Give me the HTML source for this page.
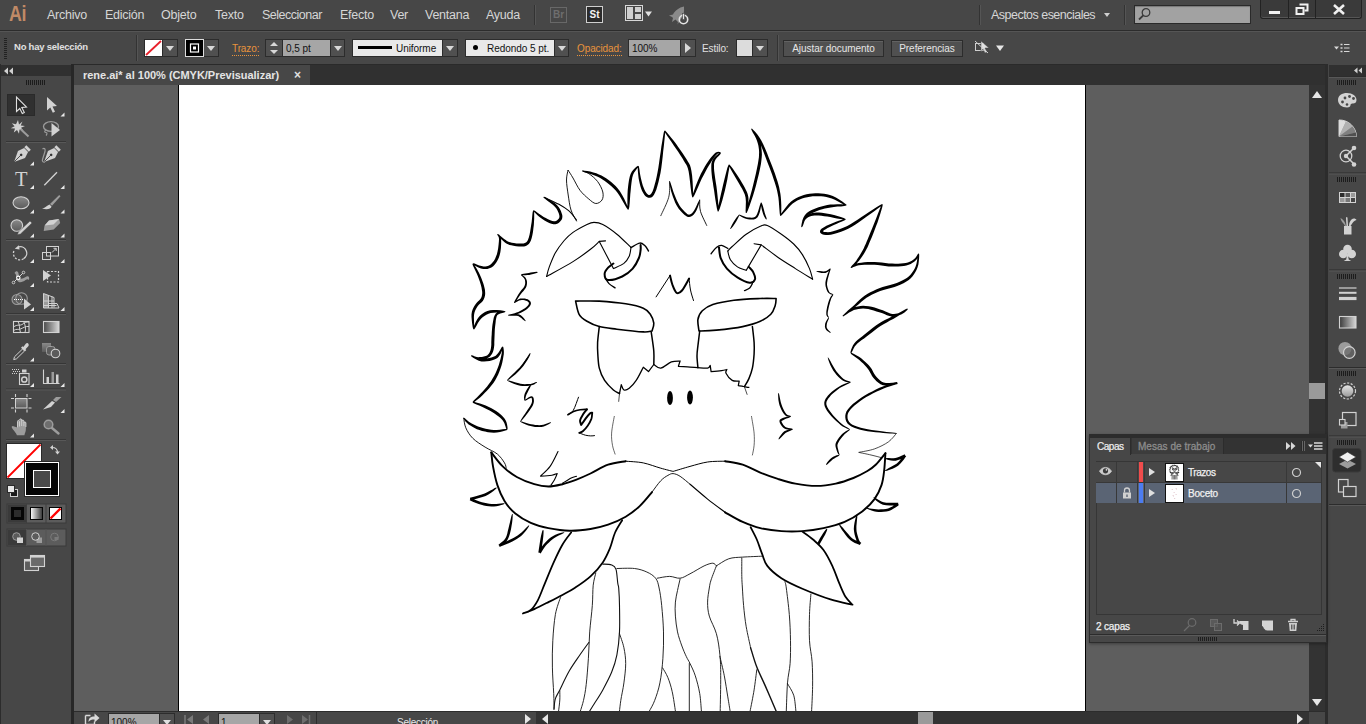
<!DOCTYPE html>
<html lang="es">
<head>
<meta charset="utf-8">
<title>rene.ai* al 100% (CMYK/Previsualizar)</title>
<style>
*{box-sizing:border-box;margin:0;padding:0}
html,body{width:1366px;height:724px;overflow:hidden;background:#474747;font-family:"Liberation Sans",sans-serif;color:#dcdcdc;font-size:11px}
.abs{position:absolute}
#app{position:relative;width:1366px;height:724px;background:#474747;overflow:hidden}
/* menubar */
#menubar{left:0;top:0;width:1366px;height:31px;background:#474747;border-bottom:1px solid #2c2c2c}
#menubar .mi{position:absolute;top:8px;font-size:12.5px;color:#d6d6d6;white-space:nowrap;letter-spacing:-0.25px}
#logo{left:9px;top:-1px;font-size:22px;font-weight:bold;color:#c08a66;letter-spacing:-0.5px;line-height:30px;transform:scaleX(.81);transform-origin:left center}
/* control bar */
#ctrl{left:-1px;top:31px;width:1367px;height:34px;background:#474747;border-top:1px solid #555;border-bottom:1px solid #2a2a2a}
#ctrl .t{position:absolute;white-space:nowrap;font-size:10px;color:#e0e0e0;top:9px;letter-spacing:-0.1px;line-height:12px}
#ctrl .o{color:#e8933c;border-bottom:1px dotted #e8933c;line-height:12px}
.fld{position:absolute;background:#a6a6a6;border:1px solid #2c2c2c;color:#111;font-size:10px;line-height:18px;padding-left:3px;white-space:nowrap;letter-spacing:-0.05px;overflow:hidden}
.dd{position:absolute;background:#505050;border:1px solid #2c2c2c;border-left:none}
.dd:after{content:"";position:absolute;left:50%;top:50%;margin:-2px 0 0 -4px;border:4px solid transparent;border-top:5px solid #d8d8d8;border-bottom:none}
.btn{position:absolute;border:1px solid #2c2c2c;background:#505050;color:#e6e6e6;font-size:10px;text-align:center;line-height:15px;white-space:nowrap;letter-spacing:-0.05px;box-shadow:inset 0 1px 0 #626262}
/* left tools */
#tools{left:0;top:64px;width:74px;height:660px;background:#474747;border-left:1px solid #2c2c2c;border-right:3px solid #272727}
#tools .hd{position:absolute;left:0;top:1px;width:70px;height:11px;background:#303030}
.grip{position:absolute;height:5px;background:repeating-linear-gradient(90deg,#1e1e1e 0,#1e1e1e 1px,transparent 1px,transparent 2px)}
.sep{position:absolute;left:5px;width:60px;height:1px;background:#5a5a5a;border-top:1px solid #3a3a3a;height:2px}
/* doc */
#tabrow{left:74px;top:65px;width:1251px;height:20px;background:#303030}
#tab{left:74px;top:65px;width:236px;height:20px;background:#474747;font-size:11px;font-weight:bold;color:#e4e4e4;line-height:21px;padding-left:9px;white-space:nowrap;letter-spacing:-0.02px}
#canvas{left:74px;top:85px;width:1235px;height:626px;background:#5e5e5e;overflow:hidden}
#art{left:104px;top:-1px;width:908px;height:640px;background:#fff;border:1px solid #000}
#vscroll{left:1309px;top:85px;width:16px;height:626px;background:#333}
#status{left:74px;top:711px;width:1251px;height:13px;background:#474747;border-top:1px solid #2c2c2c}
#status .f{position:absolute;top:1px;height:14px;background:#a6a6a6;border:1px solid #2c2c2c;color:#111;font-size:10px;line-height:18px;padding-left:2px;overflow:hidden}
#status .d{position:absolute;top:1px;height:14px;background:#505050;border:1px solid #2c2c2c;border-left:none}
#status .d:after{content:'';position:absolute;left:3px;top:6px;border:4px solid transparent;border-top:5px solid #e0e0e0;border-bottom:none}
/* right dock */
#dock{left:1325px;top:64px;width:41px;height:660px;background:#474747;border-left:3px solid #2c2c2c}
/* layers */
#layers{left:1089px;top:434px;width:238px;height:209px;background:#474747;border:1px solid #2c2c2c;border-top:4px solid #2c2c2c;box-shadow:0 1px 3px rgba(0,0,0,.35)}
#layers .abs{position:absolute}
#layers .row{position:absolute;left:6px;width:225px;height:21px}
#layers .cs{position:absolute;top:0;width:1px;height:100%;background:#383838}
#layers .nm{position:absolute;left:92px;top:4px;font-size:10px;letter-spacing:-0.3px;color:#f0f0f0;line-height:13px;-webkit-text-stroke:.25px #f0f0f0}
</style>
</head>
<body>
<div id="app">
<!--MENUBAR-->
<div id="menubar" class="abs">
<div id="logo" class="abs">Ai</div>
<span class="mi" style="left:47px">Archivo</span>
<span class="mi" style="left:105px">Edición</span>
<span class="mi" style="left:161px">Objeto</span>
<span class="mi" style="left:215px">Texto</span>
<span class="mi" style="left:262px;letter-spacing:-0.5px">Seleccionar</span>
<span class="mi" style="left:340px">Efecto</span>
<span class="mi" style="left:390px">Ver</span>
<span class="mi" style="left:425px">Ventana</span>
<span class="mi" style="left:486px">Ayuda</span>

<div class="abs" style="left:534px;top:5px;width:1px;height:20px;background:#333;box-shadow:1px 0 0 #555"></div>
<div class="abs" style="left:550px;top:7px;width:17px;height:16px;border:1px solid #686868;color:#6e6e6e;font-size:10px;font-weight:bold;line-height:14px;text-align:center">Br</div>
<div class="abs" style="left:586px;top:6px;width:17px;height:17px;border:1px solid #cfcfcf;background:#2b2b2b;color:#f2f2f2;font-size:10px;font-weight:bold;line-height:15px;text-align:center">St</div>
<svg class="abs" style="left:625px;top:5px" width="30" height="18" viewBox="0 0 30 18"><rect x="0.5" y="0.5" width="17" height="15" fill="#474747" stroke="#d8d8d8"/><rect x="2" y="2" width="6" height="12" fill="#cfcfcf"/><rect x="10" y="2" width="6" height="5" fill="#cfcfcf"/><rect x="10" y="9" width="6" height="5" fill="#cfcfcf"/><path d="M20 6.5h7l-3.5 5z" fill="#e0e0e0"/></svg>
<svg class="abs" style="left:667px;top:5px" width="25" height="21" viewBox="0 0 25 21"><path d="M17 1.5c-5 1-9 4-11 8l-4 1 3 1.5 1 1-1 4 3.5-2.5 2.5 2.5-.5 2.5 3-5c3-3 4-8 3.5-12z" fill="#8a8a8a"/><circle cx="16.5" cy="14.5" r="4.2" fill="none" stroke="#e6e6e6" stroke-width="1.6"/><rect x="15.6" y="8.5" width="1.8" height="6" fill="#e6e6e6" stroke="#474747" stroke-width=".6"/></svg>
<div class="abs" style="left:979px;top:5px;width:1px;height:20px;background:#333;box-shadow:1px 0 0 #555"></div>
<span class="mi" style="left:991px;top:8px;font-size:12.5px;letter-spacing:-0.52px">Aspectos esenciales</span>
<div class="abs" style="left:1104px;top:13px;border:3.5px solid transparent;border-top:4px solid #d0d0d0;border-bottom:none"></div>
<div class="abs" style="left:1124px;top:5px;width:1px;height:20px;background:#333;box-shadow:1px 0 0 #555"></div>
<div class="abs" style="left:1134px;top:5px;width:117px;height:19px;background:#a2a2a2;border:1px solid #2a2a2a;box-shadow:inset 0 1px 1px #777"></div>
<svg class="abs" style="left:1137px;top:7px" width="16" height="14" viewBox="0 0 16 14"><circle cx="9" cy="5.5" r="3.8" fill="none" stroke="#3a3a3a" stroke-width="1.3"/><path d="M6.3 8.3L2 12.5" stroke="#3a3a3a" stroke-width="1.8"/></svg>
<div class="abs" style="left:1260px;top:0;width:102px;height:19px;background:#3a3a3a;border:1px solid #222;border-top:none;border-radius:0 0 3px 3px;box-shadow:inset 0 -1px 0 #555"></div>
<div class="abs" style="left:1288px;top:0;width:1px;height:18px;background:#222"></div>
<div class="abs" style="left:1315px;top:0;width:1px;height:18px;background:#222"></div>
<div class="abs" style="left:1269px;top:11px;width:11px;height:3px;background:#f0f0f0"></div>
<svg class="abs" style="left:1295px;top:3px" width="14" height="13" viewBox="0 0 14 13"><path d="M4.5 1.5h8v6h-3" fill="none" stroke="#f0f0f0" stroke-width="2"/><rect x="1.5" y="5" width="7" height="6" fill="none" stroke="#f0f0f0" stroke-width="2"/></svg>
<svg class="abs" style="left:1332px;top:3px" width="14" height="13" viewBox="0 0 14 13"><path d="M2 2l10 9M12 2L2 11" stroke="#f0f0f0" stroke-width="2.6"/></svg>

</div>
<!--CTRL-->
<div id="ctrl" class="abs">

<div class="abs" style="left:5px;top:6px;width:3px;height:21px;background:repeating-linear-gradient(180deg,#222 0,#222 1px,transparent 1px,transparent 2px)"></div>
<span class="t" style="left:15px;font-weight:bold;font-size:9.5px;letter-spacing:-0.23px">No hay selección</span>
<div class="abs" style="left:137px;top:3px;width:1px;height:26px;background:#333;box-shadow:1px 0 0 #555"></div>
<svg class="abs" style="left:145px;top:7px" width="19" height="18" viewBox="0 0 19 18"><rect x=".5" y=".5" width="18" height="17" fill="#fff" stroke="#2a2a2a"/><path d="M2 16L17 2" stroke="#e8202a" stroke-width="1.8"/></svg>
<div class="dd" style="left:164px;top:7px;width:15px;height:18px"></div>
<svg class="abs" style="left:186px;top:7px" width="19" height="18" viewBox="0 0 19 18"><rect x=".5" y=".5" width="18" height="17" fill="#000" stroke="#ddd"/><rect x="5.5" y="5" width="8" height="8" fill="none" stroke="#fff" stroke-width="1.2"/><rect x="8" y="7.5" width="3" height="3" fill="#fff"/></svg>
<div class="dd" style="left:205px;top:7px;width:15px;height:18px"></div>
<span class="t o" style="left:233px;top:11px">Trazo:</span>
<div class="abs" style="left:266px;top:7px;width:18px;height:18px;background:#505050;border:1px solid #2c2c2c"></div>
<div class="abs" style="left:271px;top:10px;border:4px solid transparent;border-bottom:4px solid #d8d8d8;border-top:none"></div>
<div class="abs" style="left:271px;top:18px;border:4px solid transparent;border-top:4px solid #d8d8d8;border-bottom:none"></div>
<div class="fld" style="left:283px;top:7px;width:49px;height:18px">0,5 pt</div>
<div class="dd" style="left:332px;top:7px;width:14px;height:18px"></div>
<div class="fld" style="left:353px;top:7px;width:91px;height:18px;background:#e9e9e9;padding-left:43px">Uniforme</div>
<div class="abs" style="left:359px;top:14px;width:34px;height:3px;background:#000"></div>
<div class="dd" style="left:444px;top:7px;width:15px;height:18px"></div>
<div class="fld" style="left:466px;top:7px;width:90px;height:18px;background:#e9e9e9;padding-left:21px">Redondo 5 pt.</div>
<div class="abs" style="left:474px;top:13px;width:5px;height:5px;border-radius:3px;background:#000"></div>
<div class="dd" style="left:556px;top:7px;width:14px;height:18px"></div>
<span class="t o" style="left:578px;top:11px">Opacidad:</span>
<div class="fld" style="left:629px;top:7px;width:53px;height:18px">100%</div>
<div class="abs" style="left:682px;top:7px;width:15px;height:18px;background:#505050;border:1px solid #2c2c2c;border-left:none"></div>
<div class="abs" style="left:686px;top:11px;border:5px solid transparent;border-left:6px solid #d8d8d8;border-right:none"></div>
<span class="t" style="left:703px;top:11px">Estilo:</span>
<div class="abs" style="left:737px;top:7px;width:17px;height:18px;background:#dcdcdc;border:1px solid #2a2a2a"></div>
<div class="dd" style="left:754px;top:7px;width:15px;height:18px"></div>
<div class="abs" style="left:778px;top:3px;width:1px;height:26px;background:#333;box-shadow:1px 0 0 #555"></div>
<div class="btn" style="left:784px;top:8px;width:101px;height:17px">Ajustar documento</div>
<div class="btn" style="left:892px;top:8px;width:72px;height:17px">Preferencias</div>
<svg class="abs" style="left:975px;top:8px" width="34" height="16" viewBox="0 0 34 16"><rect x="1.5" y="3.5" width="8" height="7" fill="none" stroke="#cfcfcf"/><path d="M7 1l8 7h-4l2 4-2 1-2-4-2 3z" fill="#e0e0e0" stroke="#474747" stroke-width=".5"/><path d="M1 1l13 12" stroke="#cfcfcf" stroke-width="1"/><path d="M22 5.5h8l-4 5.5z" fill="#e6e6e6"/></svg>
<svg class="abs" style="left:1335px;top:11px" width="18" height="12" viewBox="0 0 18 12"><path d="M0 3.5h5l-2.5 3z" fill="#d8d8d8"/><path d="M6.5 1.5h2M6.5 5h2M6.5 8.5h2" stroke="#d8d8d8" stroke-width="1.6"/><path d="M10 1.5h5.5M10 5h5.5M10 8.5h5.5" stroke="#d8d8d8" stroke-width="1.2"/></svg>

</div>
<!--TOOLS-->
<div id="tools" class="abs">
<div class="hd"></div>
<!--TOOLSBODY-->
</div>
<!--TOOLSSVG--><svg class="abs" style="left:0;top:0" width="74" height="724" viewBox="0 0 74 724"><defs><linearGradient id="gv" x1="0" y1="0" x2="0" y2="1"><stop offset="0" stop-color="#8a8a8a"/><stop offset="1" stop-color="#5a5a5a"/></linearGradient><linearGradient id="gh" x1="0" y1="0" x2="1" y2="0"><stop offset="0" stop-color="#4a4a4a"/><stop offset="1" stop-color="#d8d8d8"/></linearGradient><linearGradient id="gh2" x1="0" y1="0" x2="1" y2="0"><stop offset="0" stop-color="#fff"/><stop offset="1" stop-color="#333"/></linearGradient></defs><path d="M8 67.5l-4 3.5 4 3.5zM13 67.5l-4 3.5 4 3.5z" fill="#d0d0d0"/><path d="M26.5 80v5M28.5 80v5M30.5 80v5M32.5 80v5M34.5 80v5M36.5 80v5M38.5 80v5M40.5 80v5M42.5 80v5M44.5 80v5" stroke="#1c1c1c" stroke-width="1"/><rect x="7.5" y="94.5" width="27" height="21" fill="#303030" stroke="#2a2a2a"/><path d="M16.5 97V111.5L19.8 108.5 22.3 113.5 24.3 112.5 21.8 107.5 26.5 107z" fill="#262626" stroke="#e0e0e0" stroke-width="1.1" stroke-linejoin="miter"/><path d="M47 97V110.5L50.3 107.5 52.8 112.8 55 111.8 52.5 106.5 57 106z" fill="#d2d2d2"/><path d="M64.5 112.5V116.5H60.5z" fill="#e8e8e8"/><path d="M18 120l1 4.5 3.5-3-1.8 4 4.3.5-4 1.8 2.5 3-4-1.2-.5 4.2-2-3.8-3.2 2.5 1.2-4-4.2-.3 3.8-2-2.8-3 4.2 1z" fill="#d2d2d2"/><path d="M20.5 129l8 7.5" stroke="#9c9c9c" stroke-width="2"/><ellipse cx="51" cy="126.5" rx="7.5" ry="4.8" fill="none" stroke="#9c9c9c" stroke-width="1.3"/><path d="M46 130c-2 1-1.5 2.5 0 2.5 1.5 0 1 2 0 3" fill="none" stroke="#9c9c9c" stroke-width="1.1"/><path d="M51.5 123v13.5l8.5-6.5z" fill="#d2d2d2"/><g transform="translate(21.5 154.5) rotate(45)"><path d="M-3.2 -10h6.4v2.8h-6.4z" fill="#d2d2d2"/><path d="M-2.8 -6.5h5.6l2.2 6.5-5 10.5-5-10.5z" fill="#d2d2d2"/><path d="M0 10.5V1.5" stroke="#474747" stroke-width=".9"/><circle cx="0" cy="0.5" r="1.3" fill="#333"/></g><path d="M34 161.5V165.5H30z" fill="#e8e8e8"/><g transform="translate(51.5 154.5) rotate(45)"><path d="M-3.2 -10h6.4v2.8h-6.4z" fill="#d2d2d2"/><path d="M-2.8 -6.5h5.6l2.2 6.5-5 10.5-5-10.5z" fill="#d2d2d2"/><path d="M0 10.5V1.5" stroke="#474747" stroke-width=".9"/><circle cx="0" cy="0.5" r="1.3" fill="#333"/></g><path d="M42.5 149c2-1.5 3 0 2.5 2.5l-2.5 8c-.5 2 .5 3 2.5 2.5" fill="none" stroke="#9c9c9c" stroke-width="1.2"/><text x="21.2" y="185.6" font-family="Liberation Serif, serif" font-size="20.5" text-anchor="middle" fill="#d2d2d2">T</text><path d="M34 185V189H30z" fill="#e8e8e8"/><path d="M44.3 185.3L57 172.2" stroke="#d2d2d2" stroke-width="1.3"/><path d="M64.5 185V189H60.5z" fill="#e8e8e8"/><ellipse cx="21" cy="202.8" rx="8" ry="6" fill="url(#gv)" stroke="#d2d2d2" stroke-width="1.1"/><path d="M34 209.5V213.5H30z" fill="#e8e8e8"/><path d="M59.2 195l1.3 1.3-8.5 9.5-2-1.8z" fill="#9c9c9c"/><path d="M49.5 204.5l2 2c-.5 2.5-4.5 3.5-9.5 2 3-.5 4-2.5 7.5-4z" fill="#d2d2d2"/><path d="M64.5 209.5V213.5H60.5z" fill="#e8e8e8"/><circle cx="16.8" cy="225.5" r="5.8" fill="url(#gv)" stroke="#d2d2d2" stroke-width="1.1"/><path d="M30 221l2 2-11.5 11-3 .8.8-2.8z" fill="#d2d2d2" stroke="#474747" stroke-width=".5"/><path d="M34 233.5V237.5H30z" fill="#e8e8e8"/><path d="M49 220.5l10-1.5 1.2 4-6.5 6.5-10 1.5.8-5z" fill="#9c9c9c"/><path d="M49 220.5l10-1.5-5.5 5.5-9 1z" fill="#d2d2d2"/><path d="M64.5 233.5V237.5H60.5z" fill="#e8e8e8"/><path d="M19 246.8a6.5 6.5 0 0 1 4.5 12" fill="none" stroke="#d2d2d2" stroke-width="1.3"/><path d="M23.5 258.8a6.5 6.5 0 0 1-9-9" fill="none" stroke="#d2d2d2" stroke-width="1.3" stroke-dasharray="2 1.5"/><path d="M14.8 248.8l4-3.5.8 4.3z" fill="#d2d2d2"/><path d="M34 259V263H30z" fill="#e8e8e8"/><rect x="46.5" y="246.5" width="12" height="9.5" fill="#3e3e3e" stroke="#d2d2d2"/><rect x="42.5" y="252.5" width="8" height="7" fill="none" stroke="#d2d2d2"/><path d="M52 252.5l4-4M53.5 248.3h2.7v2.7" fill="none" stroke="#d2d2d2" stroke-width="1"/><path d="M64.5 259V263H60.5z" fill="#e8e8e8"/><path d="M13.5 282.5L23.5 272.5" stroke="#d2d2d2" stroke-width="1"/><path d="M14.5 273c1-2 2.5-2.5 3.5-1 1 2 .5 4.5 1.5 6 2 2 4.5-.5 7-1.5 2.5-.8 3 1 2.5 3.5-.8-1-2-1-3.5 0-2.5 2-6 3.5-8 1-1.5-2-.5-6.5-3-8z" fill="#9c9c9c"/><circle cx="13.5" cy="282.5" r="1.3" fill="#474747" stroke="#d2d2d2" stroke-width=".9"/><circle cx="23.5" cy="272.5" r="1.3" fill="#474747" stroke="#d2d2d2" stroke-width=".9"/><circle cx="18.3" cy="277.8" r="1.7" fill="#474747" stroke="#fff" stroke-width="1.1"/><path d="M34 283V287H30z" fill="#e8e8e8"/><rect x="47.5" y="271.5" width="11" height="10.5" fill="none" stroke="#d2d2d2" stroke-width="1.2" stroke-dasharray="2 1.5"/><path d="M43 270v11l8-5.5z" fill="#d2d2d2"/><circle cx="17" cy="299.5" r="5" fill="#5c5c5c" stroke="#9c9c9c" stroke-width="1.1"/><circle cx="21.5" cy="298.5" r="5.8" fill="none" stroke="#9c9c9c" stroke-width="1.1"/><path d="M14 299.5h9" stroke="#fff" stroke-width="1.2" stroke-dasharray="1 1"/><path d="M24 298.5v11l7-5z" fill="#d2d2d2"/><path d="M34 307V311H30z" fill="#e8e8e8"/><path d="M43 293.5l5 1.5v13h-5z" fill="#9c9c9c"/><path d="M43.5 293.5v14.5h15.5M48.5 295v13M43.5 301h10.5M43.5 305.5h13M43.5 293.5l10.5 4v10M52 296.5v11.5M48 303.5h9l2 4.5" fill="none" stroke="#d2d2d2" stroke-width="1"/><path d="M64.5 307V311H60.5z" fill="#e8e8e8"/><rect x="13.5" y="321.5" width="15.5" height="11" fill="#3e3e3e" stroke="#d2d2d2" stroke-width="1.1"/><path d="M13.5 327c4-3 6-1 8.5-2.5s4-3 7-2.5M13.5 330.5c3-2 4.5-.5 7-1.5s5-3 8.5-2.5M18 321.5c2 3 1 7 2.5 11M23.5 321.5c2 3 2.5 8 1.5 11" fill="none" stroke="#d2d2d2" stroke-width="1"/><rect x="43.5" y="321.5" width="15.5" height="11" fill="url(#gh)" stroke="#d2d2d2" stroke-width="1.1"/><path d="M26 343.5c1.5-1.5 3.5 .5 2.5 2.5l-3 3.2 .8 .8-1.5 1.5-3.8-3.8 1.5-1.5.8 .8z" fill="#d2d2d2"/><path d="M22.5 349l2 2-8 7.8-2.8 .8.8-2.8z" fill="#474747" stroke="#d2d2d2" stroke-width="1"/><path d="M34 357.5V361.5H30z" fill="#e8e8e8"/><rect x="42" y="343" width="9" height="9" fill="url(#gv)"/><rect x="46.5" y="346.5" width="8.5" height="8.5" rx="2.5" fill="#5c5c5c" stroke="#9c9c9c" stroke-width="1"/><circle cx="55.5" cy="353.5" r="4.3" fill="#5c5c5c" stroke="#d2d2d2" stroke-width="1.1"/><rect x="19.5" y="373.5" width="9.5" height="11" fill="#474747" stroke="#d2d2d2" stroke-width="1.1"/><rect x="22" y="369.5" width="4.5" height="3" fill="#d2d2d2"/><circle cx="24.3" cy="379.5" r="2.6" fill="none" stroke="#d2d2d2" stroke-width="1.5"/><path d="M12 369.5h8M13 371.5h7M12 373.5h6" stroke="#d2d2d2" stroke-width="1" stroke-dasharray="1 1"/><path d="M34 383V387H30z" fill="#e8e8e8"/><path d="M43.5 369.5v14h16" fill="none" stroke="#d2d2d2" stroke-width="1.1"/><rect x="46.5" y="377" width="2.5" height="6" fill="#d2d2d2"/><rect x="51.5" y="372" width="2.5" height="11" fill="#9c9c9c"/><rect x="56" y="374.5" width="2.5" height="8.5" fill="#d2d2d2"/><path d="M64.5 383V387H60.5z" fill="#e8e8e8"/><rect x="15.5" y="398.5" width="11.5" height="9.5" fill="url(#gv)" stroke="#d2d2d2" stroke-width="1"/><path d="M15.5 394v3M27 394v3M15.5 409.5v3M27 409.5v3M11 398.5h3M11 408h3M28.5 398.5h3M28.5 408h3" stroke="#d2d2d2" stroke-width="1.1"/><path d="M43 409.5l9-8.5 3 1.5-4 4.5z" fill="#d2d2d2"/><path d="M53 400l3-3h5.5l-5.5 5z" fill="#9c9c9c"/><path d="M64.5 409V413H60.5z" fill="#e8e8e8"/><path d="M17.5 427.5v-6c0-1.5 2-1.5 2 0v-1.5c0-1.5 2.2-1.5 2.2 0v1.2c0-1.5 2.2-1.5 2.2 0v2c0-1.5 2-1.5 2 0v5.5c0 3-1 4-1.5 6.5h-7.5c-.5-2-2.5-3.5-5-7.5-.8-1.5 1-2.5 2.2-1.2z" fill="#9c9c9c"/><path d="M17.5 427.5v-6c0-1.5 2-1.5 2 0v5M19.5 420c0-1.5 2.2-1.5 2.2 0v6M21.7 421.2c0-1.5 2.2-1.5 2.2 0v5M23.9 423c0-1.5 2-1.5 2 0v4" fill="none" stroke="#d2d2d2" stroke-width=".9"/><path d="M34 433.5V437.5H30z" fill="#e8e8e8"/><circle cx="48.5" cy="424.5" r="4.3" fill="#6e6e6e" stroke="#9c9c9c" stroke-width="1.5"/><path d="M52 428l6.5 5.5" stroke="#9c9c9c" stroke-width="2.4" stroke-linecap="round"/><rect x="6.5" y="443.5" width="35" height="35" fill="#fff" stroke="#2a2a2a"/><path d="M7.5 477.5L40.5 444.5" stroke="#f00" stroke-width="1.8"/><rect x="24.5" y="461.5" width="35" height="35" fill="#fff" stroke="#2a2a2a"/><rect x="26" y="463" width="32" height="32" fill="#050505"/><rect x="33" y="470" width="18" height="18" fill="#fff"/><rect x="34" y="471" width="16" height="16" fill="#4a4a4a"/><path d="M52 447.5c3.5 0 5.5 1.5 5.5 5" fill="none" stroke="#d2d2d2" stroke-width="1.2"/><path d="M50 447.5l3-2.5v5zM55 451.5h5l-2.5 3z" fill="#d2d2d2"/><rect x="10.5" y="489.5" width="7" height="7" fill="#1a1a1a" stroke="#cfcfcf"/><rect x="7.5" y="485.5" width="7" height="7" fill="#e8e8e8" stroke="#2a2a2a"/><rect x="7" y="504" width="59" height="19" fill="#5c5c5c" stroke="#3a3a3a"/><rect x="7.5" y="504.5" width="19" height="18" fill="#3a3a3a"/><path d="M26.5 504v19M46 504v19" stroke="#3e3e3e"/><rect x="11" y="507" width="13" height="13" fill="#050505"/><rect x="14" y="510" width="7" height="7" fill="#2c2c2c"/><rect x="30.5" y="507.5" width="12" height="12" fill="url(#gh2)" stroke="#050505"/><rect x="49.5" y="507.5" width="12" height="12" fill="#fff" stroke="#050505"/><path d="M50.5 518.5L60.5 508.5" stroke="#f00" stroke-width="2.4"/><rect x="7" y="529" width="59" height="17" fill="#5c5c5c" stroke="#3a3a3a"/><rect x="7.5" y="529.5" width="19" height="16" fill="#3a3a3a"/><path d="M26.5 529v17M46 529v17" stroke="#525252"/><circle cx="16.5" cy="536.5" r="3.8" fill="#5a5a5a" stroke="#9c9c9c" stroke-width="1"/><rect x="17" y="537.5" width="6" height="5.5" fill="#d2d2d2"/><rect x="36.5" y="537.5" width="5.5" height="5.5" fill="#9c9c9c"/><circle cx="35.5" cy="536.5" r="3.8" fill="#5c5c5c" stroke="#d2d2d2" stroke-width="1"/><circle cx="54.5" cy="537" r="3.8" fill="none" stroke="#7a7a7a" stroke-width="1"/><path d="M54.5 537h4v3h-4z" fill="#7a7a7a"/><rect x="24.5" y="559.5" width="14" height="11" fill="#5e5e5e" stroke="#d2d2d2" stroke-width="1.1"/><path d="M24.5 560.5h14" stroke="#d2d2d2" stroke-width="2"/><rect x="30.5" y="555.5" width="14" height="11" fill="#6a6a6a" stroke="#d2d2d2" stroke-width="1.1"/><path d="M30.5 556.5h14" stroke="#d2d2d2" stroke-width="2.2"/><path d="M6 141.5h60" stroke="#363636"/><path d="M6 142.5h60" stroke="#585858"/><path d="M6 239.5h60" stroke="#363636"/><path d="M6 240.5h60" stroke="#585858"/><path d="M6 313.5h60" stroke="#363636"/><path d="M6 314.5h60" stroke="#585858"/><path d="M6 363.5h60" stroke="#363636"/><path d="M6 364.5h60" stroke="#585858"/><path d="M6 389.0h60" stroke="#363636"/><path d="M6 390.0h60" stroke="#585858"/><path d="M6 439.5h60" stroke="#363636"/><path d="M6 440.5h60" stroke="#585858"/></svg><!--/TOOLSSVG-->
<!--DOC-->
<div id="tabrow" class="abs"></div>
<div id="tab" class="abs">rene.ai* al 100% (CMYK/Previsualizar)<span style="position:absolute;left:220px;top:0;font-size:12px;font-weight:bold;color:#e0e0e0">×</span></div>
<div id="canvas" class="abs">
<div id="art" class="abs">
<!--ART-->
</div>
<!--ARTSVG--><svg class="abs" style="left:0;top:0" width="1235" height="626" viewBox="74 85 1235 626" fill="none" stroke="#000" stroke-linecap="round" stroke-linejoin="round"><path d="M463.4 418.4L463.9 419.3L464.7 420.4L465.7 421.7L467.1 423.1L468.6 424.4L470.4 425.6L472.4 426.8L474.6 428.0L476.9 429.2L479.4 430.1L482.1 430.9L485.0 431.6L488.0 432.2L490.9 432.5L493.9 432.7L496.9 432.5L500.0 432.0L503.0 431.3L505.5 430.6L507.2 429.9L507.0 429.1L505.2 429.0L502.6 429.3L499.7 429.7L496.7 429.9L493.9 429.9L491.2 429.7L488.4 429.3L485.6 428.7L482.9 428.0L480.4 427.3L478.0 426.5L475.8 425.5L473.7 424.5L471.7 423.4L470.0 422.4L468.5 421.4L467.1 420.3L465.9 419.2L464.9 418.3L464.0 417.8zM507.5 429.4L507.6 428.1L507.4 426.4L507.0 424.3L506.4 422.1L505.6 420.2L504.5 418.5L503.2 416.9L501.8 415.4L500.1 414.0L498.3 412.5L496.1 411.0L493.6 409.5L491.0 408.0L488.3 406.7L485.7 405.4L482.9 404.4L480.0 403.4L477.1 402.7L474.7 402.1L472.9 401.9L472.7 402.7L474.2 403.6L476.5 404.6L479.2 405.6L482.0 406.8L484.5 408.0L487.0 409.2L489.6 410.6L492.1 412.1L494.5 413.5L496.5 414.9L498.3 416.2L499.9 417.5L501.2 418.8L502.4 420.1L503.4 421.4L504.3 423.0L505.0 424.9L505.6 426.8L506.1 428.5L506.7 429.6zM473.1 402.6L474.4 401.9L476.2 400.6L478.2 399.0L480.4 397.2L482.5 395.3L484.6 393.1L486.9 390.8L489.2 388.3L491.4 385.6L493.4 382.9L495.2 380.2L496.8 377.3L498.2 374.4L499.4 371.5L500.5 368.6L501.5 365.6L502.3 362.5L502.9 359.4L503.4 356.6L503.8 354.2L503.9 352.1L503.8 350.3L503.6 348.8L503.4 347.6L503.1 346.8L502.3 346.8L502.1 347.7L502.1 348.9L502.1 350.3L502.0 351.9L501.6 353.8L501.1 356.2L500.5 358.9L499.7 361.8L498.9 364.8L497.9 367.6L496.7 370.4L495.5 373.2L494.1 375.9L492.6 378.6L491.0 381.3L489.1 383.8L487.1 386.4L484.9 389.0L482.7 391.4L480.7 393.5L478.8 395.6L476.9 397.5L475.0 399.2L473.5 400.7L472.5 402.0zM502.3 346.6L501.5 347.5L500.7 348.9L499.8 350.5L498.9 352.0L498.0 353.3L497.1 354.2L496.4 355.1L495.7 355.7L494.7 356.3L493.4 356.8L491.5 357.4L489.1 357.9L486.5 358.4L484.0 358.6L481.8 358.6L479.6 358.2L477.2 357.4L474.9 356.4L472.9 355.6L471.3 355.2L470.9 356.0L472.1 357.0L474.0 358.3L476.3 359.6L478.8 360.7L481.4 361.4L484.1 361.5L486.9 361.3L489.7 360.9L492.3 360.3L494.4 359.6L496.1 358.8L497.4 357.9L498.4 356.9L499.2 355.9L500.0 354.7L500.9 353.2L501.7 351.5L502.4 349.7L502.9 348.1L503.1 347.0zM470.9 356.0L471.7 356.6L472.9 357.4L474.4 358.2L476.2 358.9L478.0 359.2L480.0 359.3L482.2 359.3L484.4 359.0L486.6 358.5L488.5 357.6L490.0 356.5L491.2 355.1L492.2 353.5L493.0 351.7L493.6 349.7L494.0 347.5L494.3 344.9L494.3 342.3L494.4 339.7L494.5 337.2L494.6 334.7L494.7 332.2L494.8 329.7L495.0 327.3L495.3 325.0L495.6 322.6L495.8 320.3L496.2 318.2L496.7 316.3L497.4 315.1L498.6 314.2L500.3 313.5L502.3 313.0L504.1 312.6L505.4 312.1L505.2 311.3L503.9 311.2L502.0 311.3L499.8 311.6L497.6 312.3L495.8 313.5L494.6 315.4L493.8 317.5L493.3 319.9L492.9 322.3L492.5 324.6L492.2 327.0L492.0 329.5L491.8 332.0L491.7 334.5L491.5 337.0L491.4 339.6L491.3 342.2L491.3 344.8L491.1 347.1L490.8 349.1L490.3 350.8L489.7 352.2L489.0 353.5L488.1 354.5L487.1 355.4L485.7 356.0L483.9 356.6L481.9 356.9L479.9 357.1L478.2 357.2L476.7 357.0L475.1 356.5L473.6 355.9L472.3 355.4L471.3 355.2zM505.3 311.3L503.3 310.7L500.3 310.3L496.8 310.0L493.2 309.9L490.1 310.3L487.4 311.0L485.0 312.1L482.7 313.4L480.7 315.0L478.8 316.9L477.2 319.2L475.7 322.0L474.6 324.8L473.7 327.2L473.3 329.0L474.1 329.4L475.2 327.9L476.5 325.7L477.9 323.1L479.4 320.7L481.0 318.7L482.6 317.3L484.4 315.9L486.4 314.8L488.5 313.8L490.7 313.1L493.4 312.7L496.7 312.5L500.1 312.5L503.2 312.5L505.3 312.1zM474.1 329.2L474.3 327.0L474.1 323.9L474.0 320.5L473.9 317.1L474.1 314.4L474.5 312.4L475.1 310.7L475.8 309.2L476.7 307.8L477.6 306.3L478.6 305.0L479.9 303.7L481.4 302.4L482.8 300.9L483.8 299.2L484.5 297.4L485.0 295.6L485.2 293.7L485.1 291.7L484.9 289.5L484.3 286.9L483.5 284.0L482.4 281.0L481.3 278.0L480.1 275.2L478.8 272.5L477.3 269.7L475.7 267.1L474.3 264.9L473.2 263.5L472.4 263.9L473.0 265.7L474.1 268.0L475.4 270.7L476.7 273.5L477.9 276.2L478.9 278.9L479.9 281.8L480.8 284.8L481.5 287.5L481.9 289.9L482.2 291.9L482.2 293.6L482.0 295.1L481.7 296.5L481.2 297.8L480.4 299.1L479.3 300.3L477.9 301.6L476.5 303.0L475.2 304.7L474.2 306.3L473.3 308.0L472.5 309.8L471.9 311.8L471.5 314.2L471.5 317.1L471.8 320.6L472.2 324.1L472.7 327.2L473.3 329.2zM472.6 264.1L474.0 265.0L476.0 266.2L478.4 267.4L480.9 268.4L483.3 269.0L485.4 269.1L487.4 268.9L489.4 268.3L491.4 267.5L493.2 266.2L494.8 264.5L496.3 262.5L497.6 260.3L498.8 257.7L499.7 255.0L500.4 251.9L500.9 248.3L501.1 244.7L501.2 241.4L501.0 238.7L500.6 236.8L499.9 235.5L499.0 234.6L498.3 234.2L497.7 233.9L497.1 234.5L497.4 235.1L497.9 235.7L498.4 236.4L498.8 237.4L499.0 238.9L498.9 241.3L498.6 244.5L498.2 248.0L497.6 251.3L496.9 254.2L496.0 256.6L495.0 258.9L493.8 260.9L492.5 262.6L491.2 264.0L489.9 265.0L488.5 265.7L486.9 266.2L485.3 266.4L483.5 266.4L481.6 266.1L479.2 265.4L476.8 264.5L474.6 263.6L473.0 263.3zM497.1 234.5L498.0 235.7L499.3 237.2L501.0 239.0L502.7 240.6L504.3 241.9L505.6 242.9L506.8 243.7L508.0 244.3L509.5 244.9L511.2 245.3L513.5 245.8L516.1 246.2L519.0 246.5L521.7 246.6L524.1 246.4L525.9 245.9L527.5 245.1L528.8 244.0L529.9 242.5L530.9 240.6L531.7 238.0L532.4 235.0L533.0 231.7L533.4 228.3L533.8 225.2L534.0 221.9L534.2 218.5L534.2 215.3L534.2 212.5L533.9 210.5L533.1 210.5L532.6 212.4L532.3 215.2L532.0 218.4L531.7 221.7L531.2 224.8L530.7 227.9L530.2 231.2L529.6 234.4L528.9 237.2L528.1 239.4L527.4 241.0L526.6 242.0L525.9 242.6L524.9 243.0L523.5 243.4L521.6 243.6L519.2 243.6L516.5 243.4L513.9 243.0L511.8 242.7L510.2 242.3L509.0 242.0L508.0 241.5L506.9 240.9L505.7 240.1L504.1 238.9L502.3 237.5L500.5 236.0L498.9 234.7L497.7 233.9zM533.2 210.8L534.3 212.1L536.0 213.8L538.0 215.7L540.2 217.5L542.3 219.1L544.5 220.4L546.8 221.7L549.2 222.9L551.4 223.8L553.5 224.3L555.5 224.2L557.2 223.7L558.6 222.9L559.7 221.9L560.6 221.0L561.4 220.0L562.0 218.9L562.3 217.5L562.4 216.1L562.1 214.6L561.6 212.9L560.9 211.0L559.9 209.0L558.6 207.0L556.9 205.1L554.7 203.1L551.8 201.2L548.8 199.3L546.2 197.8L544.3 196.9L543.7 197.7L545.3 199.1L547.7 201.0L550.5 203.0L553.1 205.1L555.1 206.9L556.4 208.6L557.5 210.4L558.3 212.2L558.9 213.8L559.3 215.2L559.4 216.3L559.4 217.1L559.2 217.8L558.9 218.4L558.4 219.0L557.7 219.7L556.9 220.4L556.0 221.0L555.0 221.3L553.9 221.3L552.3 221.0L550.3 220.3L548.0 219.3L545.8 218.1L543.7 216.9L541.6 215.6L539.3 214.0L537.2 212.4L535.3 211.0L533.8 210.2z" fill="#000" stroke="none"/>
<path d="M544.0 197.3C546.5 198.5 554.6 202.0 558.9 204.3C563.1 206.7 566.6 208.8 569.5 211.4C572.4 214.0 575.3 218.6 576.5 220.0" stroke-width="1.1" />
<path d="M576.5 221.0C575.6 219.2 572.4 214.3 571.0 210.0C569.6 205.7 569.0 200.0 568.2 195.0C567.5 190.0 566.5 184.2 566.5 180.0C566.5 175.8 567.8 171.7 568.0 170.0C568.8 171.3 571.0 174.6 573.0 178.0C575.0 181.4 577.4 186.8 580.0 190.3C582.6 193.8 586.2 196.8 588.8 199.0C591.4 201.2 593.6 203.3 595.8 203.5C598.0 203.7 600.8 201.9 602.0 200.0C603.2 198.1 603.5 195.1 602.8 192.0C602.1 188.9 599.9 184.6 597.6 181.5C595.3 178.4 591.3 175.3 588.8 173.6C586.3 171.8 583.6 171.4 582.6 171.0" stroke-width="0.9" />
<path d="M582.5 171.4L584.2 172.2L586.8 172.9L589.7 173.7L592.7 174.7L595.3 175.7L597.8 176.8L600.2 178.1L602.5 179.5L604.8 181.0L607.1 182.7L609.3 184.4L611.4 186.2L613.5 188.2L615.5 190.3L617.5 192.8L619.7 196.0L622.0 200.0L624.3 204.0L626.3 207.5L627.9 209.8L628.7 209.4L627.8 206.7L626.1 203.0L624.2 198.8L622.0 194.7L619.9 191.2L617.8 188.4L615.6 186.1L613.4 184.0L611.2 182.1L608.9 180.3L606.5 178.6L604.0 177.0L601.5 175.6L598.9 174.4L596.3 173.3L593.4 172.4L590.2 171.6L587.2 171.1L584.6 170.7L582.7 170.6zM628.7 209.6L629.3 206.9L629.7 203.1L630.0 198.8L630.3 194.3L630.7 190.4L631.0 187.0L631.4 183.6L631.8 180.4L632.3 177.5L633.0 175.0L634.0 172.8L635.3 170.9L636.7 169.1L637.9 167.6L638.6 166.3L638.0 165.7L636.8 166.5L635.3 167.8L633.6 169.5L631.9 171.6L630.6 174.0L629.7 176.8L629.0 179.9L628.5 183.2L628.1 186.6L627.7 190.2L627.5 194.2L627.4 198.6L627.4 203.1L627.5 206.9L627.9 209.6zM637.9 166.0L637.8 167.7L637.8 170.0L638.0 172.7L638.3 175.5L638.6 178.2L639.1 180.8L639.7 183.5L640.4 186.2L641.2 188.7L642.1 190.9L643.1 192.8L644.1 194.5L645.3 196.0L646.7 197.1L648.2 197.8L649.7 197.8L651.3 197.4L652.7 196.4L654.0 194.8L655.1 192.6L656.3 189.7L657.4 186.1L658.5 182.0L659.5 177.6L660.5 173.0L661.3 167.9L662.0 162.4L662.7 156.6L663.2 151.2L663.8 146.6L664.2 142.5L664.6 138.8L664.9 135.6L665.1 132.9L665.1 131.0L664.3 130.8L663.7 132.7L663.2 135.4L662.7 138.5L662.1 142.2L661.4 146.2L660.8 150.9L660.0 156.3L659.2 162.0L658.4 167.5L657.5 172.4L656.6 176.9L655.6 181.3L654.5 185.3L653.5 188.7L652.5 191.4L651.5 193.2L650.7 194.3L650.0 194.8L649.4 195.0L648.8 195.0L648.2 194.8L647.3 194.1L646.4 192.9L645.4 191.4L644.5 189.7L643.7 187.8L642.8 185.4L642.1 182.9L641.4 180.3L640.8 177.8L640.3 175.2L639.8 172.5L639.5 169.8L639.1 167.6L638.7 166.0zM664.3 131.2L665.5 133.2L667.3 135.9L669.4 139.0L671.7 142.2L673.8 145.4L675.9 148.5L678.2 151.8L680.4 155.2L682.4 158.3L684.1 161.2L685.5 163.4L686.5 165.0L687.2 166.5L687.9 168.4L688.6 171.3L689.3 175.8L690.0 181.8L690.7 188.0L691.4 193.5L692.2 197.3L693.0 197.3L693.1 193.4L692.9 187.8L692.6 181.5L692.1 175.5L691.4 170.7L690.7 167.6L690.0 165.3L689.1 163.5L688.0 161.8L686.7 159.6L684.9 156.7L682.8 153.5L680.5 150.2L678.2 146.9L676.0 143.8L673.7 140.8L671.2 137.7L668.8 134.7L666.7 132.3L665.1 130.6zM693.0 197.5L694.5 194.9L696.2 191.2L698.1 186.9L700.0 182.5L701.8 178.6L703.6 175.2L705.4 171.8L707.1 168.6L708.9 165.6L710.5 163.0L712.0 160.6L713.4 158.5L714.7 156.7L715.9 155.3L717.0 154.2L717.8 153.6L718.5 153.4L719.3 153.5L720.0 153.5L720.6 153.4L720.8 152.6L720.3 152.3L719.6 152.0L718.5 151.8L717.2 151.9L715.8 152.6L714.4 153.8L713.0 155.2L711.4 157.0L709.8 159.1L708.1 161.4L706.4 164.1L704.6 167.1L702.7 170.4L700.9 173.8L699.2 177.4L697.5 181.4L695.7 185.9L694.1 190.4L692.8 194.3L692.2 197.1zM720.4 152.7L719.2 153.4L717.5 154.6L715.7 156.1L713.9 157.9L712.6 159.9L711.9 161.8L711.4 163.8L711.3 166.0L711.3 168.3L711.4 171.1L711.7 174.4L712.1 178.2L712.8 182.3L713.4 186.4L714.1 190.5L714.7 194.9L715.4 199.8L716.2 204.5L716.9 208.6L717.7 211.5L718.5 211.3L718.6 208.4L718.3 204.3L717.9 199.5L717.4 194.6L716.9 190.1L716.4 186.0L715.7 181.8L715.1 177.8L714.6 174.1L714.2 170.9L714.0 168.2L714.0 166.0L714.0 164.1L714.3 162.5L714.8 160.9L715.7 159.3L717.1 157.6L718.7 155.9L720.1 154.5L721.0 153.3zM718.5 211.5L719.7 208.8L720.9 205.0L722.3 200.4L723.6 195.5L724.9 190.6L726.0 185.4L727.3 179.5L728.3 173.6L729.2 168.5L729.4 164.9L728.6 164.7L727.3 168.1L726.0 173.1L724.5 178.9L723.1 184.7L721.9 190.0L720.8 194.8L719.7 199.7L718.7 204.4L717.9 208.4L717.7 211.3zM728.6 165.0L729.5 167.1L731.0 169.7L732.7 172.8L734.6 175.9L736.2 178.7L737.7 181.3L739.3 183.9L740.7 186.4L742.1 188.8L743.2 190.9L744.0 192.8L744.7 194.3L745.1 195.7L745.5 197.2L745.7 199.1L745.9 201.7L745.8 204.8L745.7 208.1L745.6 210.9L745.8 213.0L746.6 213.0L747.2 211.1L747.7 208.2L748.1 205.0L748.4 201.7L748.5 198.9L748.3 196.8L747.9 194.9L747.4 193.3L746.7 191.6L745.8 189.7L744.7 187.4L743.3 184.9L741.8 182.4L740.2 179.8L738.6 177.3L736.8 174.5L734.7 171.5L732.7 168.6L730.9 166.2L729.4 164.6zM746.6 213.1L747.9 210.2L749.5 206.0L751.2 201.1L753.0 195.8L754.5 190.7L756.0 185.4L757.4 179.8L758.8 174.2L760.0 168.8L760.9 164.3L761.4 160.5L761.7 157.4L761.9 154.7L761.8 152.3L761.6 149.8L761.3 147.4L760.9 145.1L760.3 143.0L759.5 140.9L758.6 138.8L757.4 136.5L755.9 134.1L754.4 131.8L753.0 129.8L751.9 128.6L751.1 129.0L751.8 130.6L752.9 132.7L754.3 135.1L755.6 137.5L756.6 139.8L757.3 141.8L757.9 143.7L758.4 145.7L758.7 147.7L759.0 150.0L759.1 152.3L759.0 154.7L758.9 157.2L758.5 160.1L757.9 163.7L757.0 168.2L755.9 173.5L754.6 179.1L753.2 184.7L751.9 189.9L750.5 195.1L749.0 200.4L747.6 205.4L746.4 209.7L745.8 212.9zM751.1 129.1L752.1 130.8L753.7 132.9L755.6 135.5L757.5 138.4L759.3 141.6L760.9 145.2L762.6 149.4L764.3 153.9L766.0 158.5L767.6 162.7L769.2 166.8L770.7 170.8L772.1 174.6L773.4 178.4L774.6 181.9L775.6 185.2L776.5 188.3L777.2 191.2L777.8 194.2L778.4 197.5L778.8 201.2L779.1 205.4L779.4 209.6L779.7 213.2L780.1 215.7L780.9 215.7L781.2 213.1L781.3 209.5L781.3 205.3L781.1 201.0L780.8 197.1L780.4 193.8L779.8 190.7L779.2 187.6L778.4 184.5L777.4 181.1L776.2 177.4L774.9 173.6L773.5 169.7L772.0 165.7L770.4 161.7L768.7 157.4L767.0 152.9L765.1 148.4L763.2 144.2L761.3 140.4L759.3 137.2L757.2 134.3L755.1 131.8L753.3 129.9L751.9 128.5zM780.8 216.0L782.6 214.3L784.9 211.7L787.6 208.7L790.3 205.8L792.7 203.6L795.0 202.0L797.3 200.6L799.7 199.5L802.1 198.6L804.6 197.8L807.2 197.2L809.9 196.7L812.7 196.3L815.5 196.2L818.3 196.2L821.0 196.3L823.7 196.6L826.4 197.0L829.1 197.7L831.8 198.5L834.8 199.7L838.1 201.4L841.3 203.2L844.1 204.7L846.2 205.6L846.6 204.8L844.9 203.4L842.3 201.5L839.2 199.5L835.9 197.6L832.8 196.1L829.9 195.1L827.0 194.3L824.1 193.8L821.2 193.4L818.3 193.2L815.4 193.2L812.5 193.4L809.5 193.7L806.6 194.2L803.8 195.0L801.1 195.9L798.5 196.9L796.0 198.2L793.5 199.7L791.1 201.6L788.5 204.1L785.9 207.3L783.4 210.5L781.4 213.3L780.2 215.4zM846.4 204.8L844.2 204.4L841.1 204.3L837.4 204.3L833.7 204.4L830.3 204.6L827.3 205.1L824.3 205.7L821.4 206.4L818.6 207.3L816.0 208.2L813.5 209.2L811.1 210.3L808.9 211.6L806.8 213.0L805.0 214.9L803.6 217.3L802.5 220.1L801.8 222.9L801.4 225.3L801.2 227.1L802.0 227.3L802.9 225.8L803.7 223.4L804.6 220.8L805.7 218.4L807.0 216.5L808.5 215.1L810.3 214.0L812.4 212.9L814.7 211.9L817.0 211.0L819.5 210.1L822.2 209.3L824.9 208.6L827.8 207.9L830.7 207.4L833.9 206.9L837.5 206.6L841.1 206.4L844.2 206.1L846.4 205.6z" fill="#000" stroke="none"/>
<path d="M803.3 221.3L804.2 220.7L805.1 219.8L806.2 218.7L807.4 217.7L808.6 217.0L809.9 216.5L811.3 216.0L812.8 215.7L814.5 215.5L816.5 215.4L818.8 215.5L821.5 215.8L824.3 216.2L827.3 216.6L830.2 217.1L833.4 217.7L836.9 218.4L840.3 219.1L843.2 219.6L845.4 219.7L845.6 218.9L843.7 218.0L840.8 217.0L837.4 216.0L834.0 215.0L830.8 214.3L827.8 213.7L824.8 213.2L821.8 212.8L819.0 212.6L816.5 212.6L814.3 212.7L812.3 213.1L810.5 213.6L808.9 214.2L807.4 215.0L806.0 216.0L804.8 217.3L803.8 218.7L803.1 219.8L802.7 220.7zM845.3 218.9L843.7 219.2L841.4 219.9L838.7 220.8L836.0 221.7L833.6 222.7L831.2 223.7L828.8 224.7L826.4 225.8L824.4 226.9L822.7 227.9L821.5 228.8L820.6 229.8L820.0 230.9L820.1 232.5L821.0 233.6L822.2 234.2L823.8 234.7L825.8 235.0L828.1 235.1L830.8 234.7L833.8 234.0L837.3 233.0L841.1 231.8L844.9 230.3L848.7 228.5L852.3 226.5L855.9 224.2L859.5 221.7L863.0 219.2L866.4 216.7L870.0 214.2L873.9 211.5L877.5 208.8L880.6 206.5L882.7 204.7L882.1 203.9L879.7 205.2L876.4 207.3L872.6 209.7L868.7 212.3L865.0 214.7L861.5 217.0L857.9 219.4L854.3 221.8L850.8 224.0L847.3 225.9L843.8 227.5L840.0 229.0L836.4 230.2L833.1 231.2L830.2 231.9L827.9 232.2L826.0 232.1L824.4 231.9L823.2 231.5L822.6 231.2L822.6 231.3L822.6 231.7L822.8 231.4L823.3 230.8L824.3 230.1L825.7 229.2L827.6 228.1L829.8 226.9L832.2 225.8L834.4 224.7L836.8 223.7L839.4 222.5L842.0 221.5L844.2 220.5L845.7 219.7zM882.0 204.2L880.8 206.4L879.5 209.7L878.0 213.6L876.4 217.7L874.9 221.4L873.5 225.0L872.0 228.7L870.5 232.3L869.1 235.8L867.8 238.9L866.7 241.6L865.7 244.0L864.7 246.1L863.8 248.2L862.7 250.3L861.4 252.6L860.1 254.8L858.7 257.0L857.3 259.1L856.1 260.9L854.8 262.5L853.5 264.0L852.2 265.3L851.2 266.4L850.5 267.4L851.1 268.0L852.1 267.4L853.3 266.5L854.7 265.3L856.3 263.9L857.7 262.3L859.2 260.5L860.7 258.4L862.3 256.2L863.8 253.9L865.1 251.7L866.3 249.5L867.4 247.4L868.4 245.2L869.4 242.8L870.6 240.1L871.9 236.9L873.3 233.5L874.7 229.8L876.1 226.0L877.5 222.4L878.8 218.5L880.1 214.4L881.3 210.4L882.3 207.0L882.8 204.4zM851.0 268.1L852.1 267.8L853.4 267.1L855.0 266.4L856.8 265.7L858.9 265.3L861.5 265.0L864.5 264.8L867.7 264.7L871.1 264.7L874.4 264.8L877.8 265.1L881.4 265.5L885.0 266.0L888.6 266.4L891.9 266.6L895.1 266.6L898.2 266.5L901.1 266.3L903.9 266.0L906.4 265.5L908.7 264.8L910.7 263.9L912.6 262.8L914.2 261.7L915.6 260.6L916.8 259.2L917.7 257.6L918.4 256.1L918.9 254.8L919.1 253.9L918.3 253.5L917.7 254.3L917.0 255.4L916.2 256.7L915.3 258.0L914.2 259.0L912.9 260.0L911.4 260.9L909.7 261.7L907.9 262.4L905.8 262.9L903.5 263.3L900.9 263.5L898.1 263.7L895.1 263.7L892.1 263.6L888.8 263.4L885.3 263.0L881.7 262.5L878.1 262.2L874.6 262.0L871.1 262.0L867.6 262.1L864.3 262.3L861.2 262.7L858.5 263.1L856.2 263.8L854.2 264.8L852.6 265.7L851.4 266.6L850.6 267.3zM918.3 253.6L917.8 255.5L917.4 258.1L917.0 261.0L916.4 264.0L915.6 266.5L914.6 268.7L913.4 270.8L912.0 272.8L910.5 274.7L908.7 276.4L906.8 277.9L904.6 279.3L902.2 280.6L899.6 281.8L896.8 283.0L893.6 284.1L890.1 285.1L886.3 286.1L882.6 287.1L879.2 288.3L876.1 289.6L873.1 290.9L870.3 292.3L867.6 293.8L864.9 295.6L862.3 297.6L859.7 299.8L857.3 302.1L854.9 304.4L852.7 306.5L850.3 308.5L847.9 310.6L845.7 312.7L843.8 314.4L842.5 315.8L843.1 316.4L844.7 315.5L846.7 313.9L849.1 312.1L851.7 310.1L854.1 308.1L856.5 306.1L859.0 303.9L861.4 301.7L863.9 299.7L866.5 297.8L869.1 296.3L871.7 294.8L874.4 293.5L877.2 292.3L880.2 291.1L883.5 290.0L887.1 289.0L890.9 288.0L894.5 287.0L897.8 285.8L900.8 284.5L903.5 283.2L906.0 281.7L908.4 280.2L910.5 278.4L912.4 276.4L914.0 274.3L915.4 272.1L916.6 269.7L917.6 267.3L918.4 264.5L918.8 261.3L919.1 258.2L919.2 255.6L919.1 253.8zM843.1 316.5L844.7 315.6L846.7 314.2L849.1 312.6L851.6 311.2L853.9 310.1L856.1 309.5L858.4 309.0L860.7 308.7L863.1 308.6L865.6 308.7L868.2 309.1L870.9 309.7L873.7 310.5L876.5 311.4L879.2 312.2L881.8 313.1L884.4 314.1L886.9 315.2L889.4 316.0L891.8 316.5L894.1 316.6L896.1 316.3L897.9 315.7L899.6 315.1L901.2 314.4L902.9 313.5L904.5 312.4L905.9 311.2L907.0 310.2L907.8 309.4L907.2 308.6L906.2 309.1L904.9 309.9L903.4 310.9L901.9 311.7L900.4 312.4L898.8 313.0L897.3 313.5L895.6 313.8L894.0 314.0L892.2 313.9L890.2 313.4L887.9 312.5L885.5 311.5L882.8 310.3L880.2 309.4L877.4 308.5L874.6 307.6L871.6 306.8L868.7 306.2L865.8 305.9L863.1 305.8L860.4 306.0L857.9 306.4L855.4 307.0L852.9 307.9L850.4 309.2L847.9 310.9L845.6 312.8L843.8 314.5L842.5 315.7zM907.3 308.6L905.5 309.3L903.3 310.5L900.6 311.9L897.8 313.5L894.9 315.0L891.9 316.5L888.7 318.2L885.4 319.8L882.1 321.6L878.9 323.5L875.9 325.6L872.9 327.8L870.1 330.0L867.3 332.2L864.8 334.3L862.4 336.2L860.1 338.0L857.9 339.8L855.9 341.6L854.2 343.5L852.9 345.6L851.9 347.7L851.1 349.8L850.6 351.6L850.4 352.8L851.2 353.2L851.9 352.1L852.7 350.4L853.6 348.5L854.7 346.6L856.0 344.9L857.6 343.3L859.5 341.7L861.7 340.1L864.1 338.4L866.6 336.5L869.2 334.5L871.9 332.4L874.7 330.2L877.6 328.0L880.5 326.1L883.5 324.2L886.8 322.4L890.0 320.6L893.2 318.9L896.1 317.2L898.9 315.5L901.7 313.7L904.2 312.0L906.3 310.6L907.7 309.4zM850.6 353.4L851.7 354.5L853.5 355.7L855.6 357.2L857.7 358.7L859.6 360.3L861.4 361.9L863.2 363.6L865.0 365.4L866.6 367.3L868.0 369.0L869.2 370.7L870.1 372.4L871.0 374.1L872.0 376.0L873.3 377.7L874.9 379.4L876.5 381.2L878.4 382.8L880.5 384.2L883.0 385.2L886.0 385.5L889.3 385.2L892.6 384.6L895.4 384.0L897.4 383.4L897.2 382.6L895.2 382.5L892.3 382.7L889.1 382.9L886.0 383.0L883.6 382.6L881.8 381.8L880.1 380.6L878.5 379.1L877.0 377.5L875.7 375.9L874.5 374.3L873.6 372.7L872.7 371.0L871.7 369.1L870.4 367.2L868.8 365.3L867.0 363.5L865.1 361.7L863.1 359.9L861.2 358.3L859.0 356.8L856.7 355.4L854.5 354.2L852.5 353.2L851.0 352.6z" fill="#000" stroke="none"/>
<path d="M897.0 381.9L895.2 382.5L892.6 383.2L889.5 384.1L886.2 385.1L882.9 386.4L879.5 387.8L875.9 389.5L872.2 391.4L868.5 393.3L865.1 395.3L861.9 397.3L858.7 399.5L855.8 401.7L853.1 403.8L850.8 405.9L849.0 407.9L847.6 409.7L846.4 411.6L845.7 413.5L845.3 415.4L845.3 417.4L845.6 419.5L846.3 421.5L847.5 423.4L849.2 425.1L851.4 426.6L854.1 427.7L857.1 428.8L860.3 429.7L863.7 430.5L867.4 431.2L871.5 431.7L875.6 432.2L879.6 432.6L883.2 432.9L886.5 433.2L889.6 433.5L892.4 433.6L894.7 433.7L896.4 433.7L896.4 433.1L894.8 432.8L892.4 432.5L889.7 432.2L886.6 431.9L883.4 431.5L879.8 431.0L875.8 430.5L871.7 429.9L867.7 429.3L864.1 428.5L860.8 427.7L857.7 426.8L854.9 425.8L852.4 424.7L850.6 423.5L849.2 422.1L848.3 420.6L847.7 418.9L847.5 417.2L847.5 415.6L847.8 414.1L848.4 412.6L849.4 411.0L850.7 409.3L852.4 407.5L854.5 405.5L857.1 403.4L860.0 401.3L863.1 399.1L866.3 397.1L869.6 395.2L873.2 393.3L876.8 391.5L880.4 389.9L883.7 388.4L886.9 387.2L890.2 386.2L893.2 385.3L895.7 384.6L897.6 384.1z" fill="#000" stroke="none"/>
<path d="M896.4 433.4C895.1 434.8 892.1 439.2 888.5 441.8C884.9 444.4 879.5 447.1 874.5 448.9C869.5 450.7 861.3 451.8 858.7 452.4C860.8 452.8 867.2 454.1 871.0 455.0C874.8 455.9 879.8 457.2 881.5 457.7" stroke-width="0.7" />
<path d="M669.3 181.6L669.4 183.3L669.9 185.7L670.5 188.5L671.2 191.4L672.0 194.1L672.9 196.7L673.9 199.3L674.9 201.9L676.1 204.4L677.3 206.6L678.7 208.7L680.2 210.6L681.8 212.3L683.3 213.8L684.6 214.9L685.8 215.8L686.8 216.5L688.0 216.9L689.1 217.1L690.4 216.8L691.5 216.3L692.7 215.5L693.8 214.4L694.9 213.1L695.9 211.5L696.9 209.4L697.9 206.9L698.9 204.2L699.6 201.8L700.0 200.1L699.4 199.9L698.5 201.4L697.5 203.6L696.3 206.2L695.2 208.6L694.1 210.5L693.2 211.8L692.2 212.9L691.3 213.7L690.4 214.3L689.6 214.6L689.0 214.7L688.5 214.6L688.0 214.4L687.2 213.9L686.2 213.1L685.0 212.0L683.6 210.6L682.2 209.0L680.7 207.2L679.5 205.4L678.3 203.3L677.1 200.9L676.0 198.4L675.0 195.9L674.0 193.5L673.1 190.9L672.2 188.1L671.4 185.4L670.6 183.0L669.9 181.4z" fill="#000" stroke="none"/>
<path d="M669.6 181.5C669.5 184.1 670.2 191.6 668.7 197.3C667.2 203.0 662.1 212.6 660.8 215.7" stroke-width="0.8" />
<path d="M699.7 200.0C699.8 201.9 699.3 207.2 700.5 211.4C701.7 215.6 705.7 223.1 706.7 225.4" stroke-width="0.9" />
<path d="M730.7 229.1L732.9 226.5L734.8 223.8L736.5 221.0L738.1 218.1L739.5 215.1L738.9 214.7L736.7 217.3L734.8 220.0L733.1 222.8L731.5 225.7L730.1 228.7zM739.1 215.2L740.2 216.0L741.8 216.9L743.8 217.9L745.9 218.8L747.9 219.3L749.8 219.5L751.8 219.6L753.8 219.4L755.8 218.7L757.6 217.2L758.9 214.7L760.0 211.5L760.7 208.0L761.3 204.8L761.5 202.7L760.9 202.5L760.1 204.6L759.2 207.6L758.2 211.0L757.1 214.0L756.0 216.0L754.8 217.0L753.4 217.5L751.7 217.7L749.9 217.6L748.1 217.5L746.3 217.2L744.4 216.5L742.4 215.7L740.6 215.0L739.3 214.6zM760.9 202.7L760.9 204.2L761.2 206.4L761.7 208.9L762.3 211.3L762.9 213.3L763.5 214.9L764.2 216.4L764.9 217.7L765.5 218.7L766.1 219.4L766.7 219.2L766.6 218.3L766.2 217.1L765.7 215.8L765.2 214.3L764.7 212.7L764.2 210.8L763.6 208.4L762.9 206.0L762.2 203.9L761.5 202.5z" fill="#000" stroke="none"/>
<path d="M463.7 418.1C464.1 419.7 464.3 424.4 465.8 427.8C467.3 431.2 469.6 435.1 472.8 438.3C476.0 441.5 481.0 444.5 485.1 447.1C489.2 449.7 494.2 451.5 497.4 454.1C500.6 456.7 503.0 460.5 504.5 462.9C506.0 465.2 505.9 467.3 506.2 468.2" stroke-width="0.9" />
<path d="M537.7 271.9L536.5 271.8L534.7 272.0L532.7 272.3L530.7 272.6L528.8 272.9L527.1 273.2L525.3 273.5L523.6 273.8L522.1 274.1L521.1 274.6L521.1 275.0L522.2 275.3L523.7 275.3L525.5 275.2L527.4 275.1L529.2 274.9L531.0 274.5L533.1 274.1L535.0 273.5L536.7 273.0L537.9 272.3zM520.9 275.0L521.5 275.7L522.4 276.6L523.4 277.5L524.2 278.5L524.8 279.5L525.0 280.6L525.2 281.9L525.2 283.2L525.0 284.6L524.6 285.8L524.0 287.0L523.1 288.2L521.9 289.6L520.7 291.0L519.5 292.7L518.3 294.6L516.9 296.9L515.6 299.2L514.5 301.3L513.9 302.8L514.3 303.0L515.4 301.8L516.8 300.0L518.3 297.8L519.8 295.6L521.1 293.7L522.3 292.2L523.5 290.9L524.6 289.5L525.7 288.1L526.4 286.6L526.8 284.9L527.0 283.3L527.0 281.7L526.7 280.3L526.2 278.9L525.4 277.6L524.3 276.5L523.1 275.7L522.1 275.0L521.3 274.6zM514.2 303.1L515.2 302.7L516.4 302.0L517.8 301.2L519.2 300.5L520.5 300.2L521.8 300.1L523.2 300.1L524.6 300.3L525.9 300.7L526.9 301.1L527.7 301.5L528.3 302.0L528.7 302.6L528.9 303.1L528.9 303.6L528.7 304.3L528.1 305.2L527.2 306.2L526.1 307.2L524.9 308.2L523.5 309.1L521.9 310.1L520.1 311.0L518.3 311.9L516.5 312.6L514.7 313.2L512.7 313.7L510.8 314.2L509.1 314.5L508.0 315.0L508.0 315.4L509.3 315.5L511.0 315.3L513.0 315.1L515.1 314.7L517.1 314.2L519.0 313.5L520.9 312.7L522.8 311.8L524.5 310.8L526.1 309.8L527.4 308.7L528.6 307.6L529.6 306.4L530.4 305.2L530.9 304.0L530.9 302.7L530.4 301.6L529.7 300.7L528.8 299.9L527.7 299.3L526.4 298.9L524.9 298.6L523.3 298.4L521.7 298.4L520.1 298.6L518.6 299.2L517.1 300.1L515.8 301.1L514.7 302.0L514.0 302.7zM508.0 315.4L509.5 315.7L511.7 315.7L514.1 315.7L516.4 315.8L518.2 316.1L519.7 316.9L521.3 318.1L522.8 319.4L524.2 320.5L525.3 321.2L525.7 320.8L525.0 319.7L523.9 318.3L522.5 316.7L520.8 315.3L518.8 314.3L516.5 313.8L514.0 313.9L511.6 314.1L509.4 314.5L508.0 315.0z" fill="#000" stroke="none"/>
<path d="M529.7 354.8L528.2 356.4L526.3 358.8L524.1 361.7L521.8 364.7L519.6 367.4L517.0 370.1L514.0 373.0L511.1 375.8L508.6 378.3L506.9 380.2L507.3 380.6L509.4 379.2L512.1 377.0L515.3 374.4L518.4 371.5L521.0 368.8L523.4 365.9L525.6 362.8L527.6 359.7L529.1 357.0L530.1 355.0zM507.0 380.6L508.7 381.6L511.3 382.7L514.3 383.9L517.4 385.0L520.1 385.7L522.5 386.0L524.9 386.1L527.1 386.0L529.1 385.8L531.0 385.5L532.6 385.0L534.2 384.4L535.4 383.6L536.4 382.9L537.1 382.3L536.9 381.9L536.0 382.1L534.9 382.6L533.6 383.1L532.2 383.6L530.6 383.9L528.9 384.0L527.0 384.1L524.9 384.2L522.7 384.0L520.5 383.7L517.9 383.1L514.9 382.2L511.8 381.3L509.1 380.5L507.2 380.2z" fill="#000" stroke="none"/>
<path d="M530.6 384.6L529.4 385.7L528.1 387.6L526.7 389.8L525.5 392.1L524.6 394.1L524.2 395.8L524.0 397.3L524.1 398.7L524.2 399.8L524.5 400.6L524.9 400.6L525.3 399.8L525.4 398.8L525.6 397.5L525.9 396.2L526.4 394.7L527.3 393.0L528.4 390.8L529.6 388.5L530.6 386.4L531.0 384.8zM524.8 400.8L526.0 400.4L527.6 399.5L529.4 398.6L530.8 397.9L531.5 397.8L531.6 398.1L531.9 398.9L532.0 400.1L532.0 401.5L531.7 402.9L531.1 404.3L530.2 406.0L529.0 407.7L527.8 409.6L526.5 411.5L525.2 413.5L523.6 415.8L522.1 418.0L520.9 420.0L520.1 421.5L520.5 421.7L521.7 420.6L523.2 418.8L524.9 416.7L526.6 414.5L528.1 412.5L529.4 410.7L530.7 408.8L531.9 407.0L532.9 405.2L533.5 403.5L533.9 401.8L533.9 400.0L533.7 398.4L533.1 397.1L531.9 396.2L530.3 396.4L528.7 397.3L527.0 398.4L525.5 399.5L524.6 400.4zM520.2 421.8L521.5 422.6L523.5 423.6L525.8 424.6L528.3 425.5L530.6 426.1L532.8 426.6L535.0 426.9L537.2 427.1L539.4 427.1L541.5 426.9L543.8 426.4L546.1 425.5L548.2 424.5L549.9 423.5L551.1 422.7L550.9 422.3L549.5 422.6L547.6 423.2L545.5 424.0L543.3 424.7L541.3 425.1L539.3 425.2L537.3 425.1L535.2 424.9L533.1 424.6L531.0 424.3L528.8 423.7L526.4 423.0L524.0 422.3L521.9 421.6L520.4 421.4z" fill="#000" stroke="none"/>
<path d="M578.5 397.2C577.6 399.4 575.0 407.6 573.2 410.5C571.4 413.4 568.8 414.0 567.9 414.7" stroke-width="1.0" />
<path d="M567.9 414.7C568.8 414.2 571.5 412.3 573.5 411.5C575.5 410.7 577.9 410.1 580.1 409.7C582.3 409.3 585.8 409.4 586.9 409.4" stroke-width="1.6" />
<path d="M586.9 409.4C586.3 410.2 584.2 412.5 583.1 414.3C582.0 416.1 580.4 418.6 580.1 420.4C579.8 422.2 581.0 424.1 581.2 424.9C581.9 423.9 584.0 420.8 585.4 418.9C586.8 417.0 588.8 414.5 589.9 413.5C591.0 412.5 591.8 412.9 592.2 412.8" stroke-width="2.0" />
<path d="M592.2 412.8C592.1 413.8 592.1 416.8 591.4 418.9C590.6 421.0 589.1 423.7 587.7 425.7C586.3 427.7 584.5 429.8 583.1 431.0C581.7 432.2 579.9 432.6 579.3 432.9" stroke-width="1.8" />
<path d="M579.3 432.9C580.3 433.3 583.5 434.7 585.4 435.2C587.3 435.7 589.2 435.8 590.7 435.9C592.2 436.0 593.9 435.7 594.5 435.6" stroke-width="1.0" />
<path d="M558.0 451.5C556.7 454.0 553.0 462.3 550.1 466.4C547.2 470.5 542.1 474.5 540.5 476.1C542.4 476.0 549.1 475.6 551.9 475.2C554.7 474.8 556.3 473.8 557.2 473.5C556.8 474.6 555.5 477.9 554.5 479.8C553.5 481.7 551.6 484.2 551.0 485.1" stroke-width="1.1" />
<path d="M562.4 483.3C563.9 482.4 568.9 479.2 571.2 478.0C573.6 476.8 575.6 476.6 576.5 476.3" stroke-width="1.1" />
<path d="M530.0 353.8L523.8 363.5" stroke-width="1.2" />
<path d="M816.5 271.5L817.7 272.0L819.5 272.5L821.5 272.9L823.6 273.1L825.5 272.9L827.0 272.3L828.3 271.4L829.4 270.4L830.2 269.5L830.7 268.8L830.3 268.4L829.5 268.8L828.6 269.5L827.5 270.2L826.3 270.9L825.1 271.3L823.6 271.4L821.7 271.2L819.7 271.1L817.8 270.9L816.5 271.1zM830.3 268.5L829.7 269.4L829.1 270.6L828.4 272.2L827.7 273.8L827.2 275.5L826.7 277.1L826.1 278.9L825.7 280.7L825.4 282.6L825.4 284.4L825.6 286.3L826.1 288.1L826.7 289.9L827.4 291.4L828.3 292.7L829.3 293.6L830.4 294.2L831.5 294.6L832.4 294.8L833.1 294.8L833.3 294.4L832.7 294.0L831.8 293.6L830.9 293.2L830.0 292.7L829.3 291.9L828.7 290.8L828.1 289.3L827.6 287.7L827.2 286.0L827.0 284.4L827.1 282.8L827.4 281.1L827.7 279.3L828.2 277.6L828.6 275.9L829.1 274.3L829.6 272.6L830.1 271.1L830.5 269.7L830.7 268.7zM833.0 294.4L832.5 294.8L831.9 295.3L831.2 296.1L830.5 297.0L829.9 298.2L829.2 299.7L828.6 301.5L828.0 303.5L827.5 305.4L827.1 307.1L826.8 308.7L826.5 310.3L826.3 311.8L826.3 313.1L826.3 314.4L826.6 315.5L827.1 316.4L827.7 317.1L828.2 317.6L828.6 317.9L829.0 317.7L828.8 317.1L828.5 316.5L828.1 315.8L827.8 315.1L827.7 314.2L827.7 313.2L827.8 311.9L828.1 310.5L828.4 309.0L828.7 307.5L829.1 305.8L829.6 303.9L830.1 302.0L830.7 300.2L831.1 298.8L831.6 297.7L832.2 296.7L832.7 296.0L833.1 295.3L833.4 294.8zM828.6 317.7L828.0 318.3L827.3 319.2L826.6 320.4L825.9 321.7L825.4 322.9L825.1 324.0L825.0 325.2L824.9 326.4L825.1 327.6L825.5 328.8L826.2 329.9L827.3 330.9L828.5 331.8L829.5 332.5L830.3 332.9L830.7 332.5L830.2 331.8L829.3 330.9L828.3 329.9L827.5 328.9L826.9 328.0L826.7 327.2L826.6 326.3L826.7 325.3L826.8 324.3L827.0 323.3L827.3 322.2L827.8 321.0L828.4 319.8L828.8 318.8L829.0 317.9z" fill="#000" stroke="none"/>
<path d="M827.7 357.6L828.2 359.5L829.1 362.0L830.3 364.9L831.7 367.8L833.2 370.4L834.9 372.7L836.6 374.9L838.5 377.0L840.4 378.8L842.3 380.2L844.2 381.3L846.2 381.9L848.1 382.2L849.6 382.4L850.7 382.3L850.9 381.9L849.8 381.4L848.3 381.0L846.6 380.5L844.9 379.8L843.3 378.8L841.7 377.3L840.0 375.6L838.2 373.5L836.5 371.4L835.0 369.2L833.5 366.8L831.9 364.1L830.5 361.3L829.2 359.0L828.1 357.4zM850.7 381.9L849.0 382.3L846.8 383.1L844.1 384.1L841.4 385.3L838.9 386.7L836.5 388.2L834.1 390.0L831.8 391.8L829.7 393.7L828.0 395.5L826.7 397.2L825.6 398.8L824.8 400.5L824.3 402.3L824.3 404.2L824.7 406.2L825.6 408.2L826.7 410.3L828.1 412.3L829.7 414.3L831.6 416.5L833.8 418.8L836.1 421.0L838.5 423.1L840.6 424.9L842.7 426.4L844.9 427.6L846.8 428.5L848.5 429.3L849.8 429.7L850.0 429.3L848.9 428.5L847.4 427.6L845.5 426.5L843.5 425.2L841.6 423.7L839.6 421.9L837.3 419.8L835.1 417.5L833.0 415.2L831.3 413.1L829.8 411.1L828.5 409.2L827.4 407.3L826.7 405.6L826.3 404.0L826.4 402.6L826.7 401.2L827.4 399.9L828.3 398.4L829.6 396.9L831.1 395.1L833.1 393.3L835.3 391.4L837.5 389.7L839.7 388.1L842.1 386.7L844.7 385.4L847.2 384.2L849.4 383.2L850.9 382.3zM849.8 429.3L848.6 429.7L847.1 430.5L845.4 431.5L843.7 432.8L842.1 434.1L840.6 435.7L839.1 437.5L837.7 439.5L836.5 441.4L835.7 443.3L835.4 445.1L835.6 446.8L836.0 448.3L836.4 449.6L836.8 450.8L837.2 451.9L837.7 453.0L838.2 453.9L838.6 454.6L839.1 455.1L839.5 454.9L839.5 454.3L839.2 453.5L838.9 452.5L838.6 451.5L838.4 450.4L838.1 449.2L837.7 447.8L837.5 446.5L837.4 445.2L837.7 443.9L838.4 442.4L839.5 440.6L840.8 438.8L842.2 437.0L843.5 435.5L844.8 434.1L846.4 432.8L847.9 431.6L849.2 430.6L850.0 429.7zM839.2 454.8L838.1 454.9L836.6 455.3L835.0 455.9L833.2 456.7L831.7 457.7L830.2 458.9L828.8 460.4L827.5 462.0L826.5 463.4L826.0 464.5L826.4 464.9L827.5 464.2L828.8 463.1L830.2 461.8L831.6 460.4L832.9 459.3L834.3 458.5L835.8 457.6L837.3 456.7L838.6 456.0L839.4 455.2z" fill="#000" stroke="none"/>
<path d="M778.2 393.0L778.1 394.7L778.2 397.1L778.4 399.9L778.9 402.7L779.5 405.2L780.4 407.5L781.4 409.8L782.6 411.9L783.8 413.7L785.1 415.2L786.4 416.2L787.9 416.6L789.2 416.8L790.2 416.8L791.0 416.6L791.0 416.2L790.3 415.8L789.3 415.6L788.3 415.3L787.2 414.8L786.3 414.0L785.4 412.7L784.3 410.9L783.3 408.9L782.3 406.7L781.5 404.6L780.8 402.3L780.2 399.6L779.7 396.9L779.2 394.6L778.6 393.0zM790.9 416.2L789.7 416.2L788.0 416.6L786.0 417.0L784.2 417.6L782.7 418.1L781.7 418.6L780.8 419.0L780.0 419.6L779.5 420.6L779.5 421.8L779.9 423.1L780.7 424.6L781.7 426.1L783.0 427.5L784.4 428.6L786.1 429.3L788.1 429.6L790.0 429.7L791.6 429.6L792.8 429.4L792.8 429.0L791.7 428.6L790.1 428.3L788.3 428.0L786.6 427.5L785.4 427.0L784.4 426.1L783.4 424.9L782.5 423.5L781.8 422.3L781.5 421.4L781.5 421.1L781.6 421.0L781.9 420.7L782.6 420.4L783.5 419.9L784.8 419.3L786.5 418.6L788.4 417.9L790.0 417.3L791.1 416.6zM792.7 429.0L791.5 429.0L789.9 429.2L788.0 429.7L786.1 430.4L784.3 431.3L782.7 432.7L781.3 434.4L780.0 436.2L779.0 437.8L778.5 439.0L778.9 439.4L780.0 438.6L781.3 437.2L782.7 435.7L784.2 434.2L785.5 433.1L786.9 432.2L788.6 431.4L790.4 430.8L791.9 430.1L792.9 429.4z" fill="#000" stroke="none"/>
<path d="M546.6 276.5C547.0 274.9 547.8 270.8 549.3 266.9C550.8 262.9 552.9 257.2 555.4 252.8C557.9 248.4 561.3 243.9 564.2 240.5C567.1 237.1 569.2 235.1 573.0 232.4C576.8 229.7 583.5 226.2 587.0 224.5C590.5 222.8 591.4 222.4 594.0 222.4C596.6 222.4 599.0 222.5 602.8 224.5C606.6 226.5 612.2 230.4 616.9 234.2C621.6 238.0 628.6 245.3 631.0 247.5" stroke-width="1.1" />
<path d="M546.6 276.5C551.0 274.0 565.7 266.1 573.0 261.6C580.3 257.1 586.1 252.7 590.5 249.3C594.9 245.9 597.8 242.7 599.3 241.4L605.5 240.9" stroke-width="1.1" />
<path d="M599.3 241.4L613.4 268.6C615.1 267.7 621.3 265.4 623.9 263.4C626.5 261.3 628.0 258.9 629.2 256.3C630.4 253.7 630.7 249.0 631.0 247.5" stroke-width="1.1" />
<path d="M631.0 247.5C632.5 246.8 637.4 243.4 639.7 243.1C642.0 242.8 643.5 244.5 645.0 245.8C646.5 247.1 647.9 250.1 648.5 251.0" stroke-width="1.4" />
<path d="M640.6 245.0C640.6 245.8 640.9 247.8 640.6 250.0C640.3 252.2 640.2 254.9 638.9 258.0C637.6 261.1 635.5 265.5 632.7 268.6C629.9 271.7 626.3 274.6 622.2 276.5C618.1 278.4 611.0 280.4 608.1 280.0C605.2 279.6 604.6 275.9 604.6 273.9C604.6 271.8 606.6 269.4 608.1 267.7C609.6 266.0 612.5 264.2 613.4 263.5" stroke-width="2.0" />
<path d="M605.5 278.3C606.1 279.2 607.4 282.0 609.0 283.6C610.6 285.2 614.1 287.2 615.1 287.9" stroke-width="1.3" />
<path d="M812.6 279.2C812.1 277.4 811.2 272.7 809.5 268.6C807.8 264.5 805.0 258.7 802.4 254.6C799.8 250.5 797.2 247.4 793.7 244.0C790.2 240.6 785.8 237.3 781.4 234.2C777.0 231.1 770.8 226.7 767.3 225.4C763.8 224.1 763.8 224.8 760.3 226.3C756.8 227.8 750.9 230.8 746.2 234.2C741.5 237.6 735.3 243.7 732.2 246.5C729.1 249.3 728.5 250.2 727.8 251.0" stroke-width="1.1" />
<path d="M812.6 279.2C809.7 277.4 801.2 272.3 795.4 268.6C789.6 264.9 783.5 261.1 777.8 257.2C772.1 253.2 764.0 246.9 761.2 244.9L754.1 243.7" stroke-width="1.1" />
<path d="M761.2 244.9L746.2 270.4C744.7 269.8 740.0 268.7 737.4 266.9C734.8 265.1 732.0 262.4 730.4 259.8C728.8 257.2 728.2 252.5 727.8 251.0" stroke-width="1.1" />
<path d="M711.1 253.7C712.0 252.7 714.6 248.9 716.4 247.5C718.1 246.1 719.7 245.2 721.6 245.4C723.5 245.6 726.8 247.9 727.8 248.4" stroke-width="1.4" />
<path d="M719.0 247.5C719.3 249.3 719.4 254.6 720.7 258.1C722.0 261.6 724.1 265.4 726.9 268.6C729.7 271.8 733.6 275.0 737.4 277.4C741.2 279.8 746.8 282.4 749.7 282.7C752.6 283.0 754.4 281.0 755.0 279.2C755.6 277.4 754.2 274.2 753.2 272.1C752.2 270.1 749.5 267.8 748.8 266.9" stroke-width="2.0" />
<path d="M752.4 283.6C752.0 284.3 751.0 286.8 749.7 288.0C748.4 289.2 745.4 290.2 744.5 290.6" stroke-width="1.3" />
<path d="M656.1 296.9L670.0 275.6" stroke-width="1.0" />
<path d="M670.0 275.6C670.4 277.2 671.4 282.1 672.5 285.0C673.6 287.9 675.0 291.9 676.6 292.8C678.2 293.7 679.9 292.9 682.0 290.5C684.1 288.1 687.9 280.6 689.1 278.6" stroke-width="2.0" />
<path d="M689.1 278.6C689.3 280.5 689.8 286.4 690.5 290.0C691.2 293.6 693.0 298.8 693.5 300.5" stroke-width="1.0" />
<path d="M575.6 301.1C579.5 301.1 590.9 300.7 599.3 301.1C607.6 301.6 618.4 302.6 625.7 303.8C633.0 305.0 639.2 306.4 643.3 308.2C647.4 309.9 648.5 311.8 650.3 314.3C652.0 316.8 653.5 320.3 653.8 323.1C654.1 325.9 652.3 329.7 652.0 331.0C650.5 331.1 649.1 332.2 643.3 331.9C637.4 331.6 624.2 330.1 616.9 329.2C609.6 328.3 604.3 327.9 599.3 326.6C594.3 325.3 590.4 323.4 587.0 321.3C583.6 319.2 581.0 317.7 579.1 314.3C577.2 310.9 576.2 303.3 575.6 301.1z" stroke-width="1.6" />
<path d="M776.1 298.5C773.5 298.5 767.3 298.2 760.3 298.5C753.3 298.8 741.8 299.2 733.9 300.2C726.0 301.2 718.1 302.8 712.8 304.6C707.5 306.4 704.8 308.3 702.3 310.8C699.8 313.3 698.4 316.2 697.9 319.6C697.4 323.0 698.8 329.1 699.0 331.0C701.9 330.9 709.1 330.8 716.4 330.1C723.7 329.4 735.4 328.1 742.7 326.6C750.0 325.1 755.6 323.4 760.3 321.3C765.0 319.2 768.3 316.9 770.8 314.3C773.3 311.7 774.3 308.1 775.2 305.5C776.1 302.9 776.0 299.7 776.1 298.5z" stroke-width="1.6" />
<path d="M599.3 326.6C599.0 329.2 597.9 337.8 597.6 342.4C597.4 347.0 597.5 349.7 597.8 354.0C598.1 358.3 598.2 363.7 599.3 368.1C600.4 372.5 602.2 376.8 604.6 380.4C607.0 384.0 610.9 387.8 613.4 390.0C615.9 392.2 618.5 392.9 619.5 393.5" stroke-width="1.5" />
<path d="M651.2 331.9C651.6 335.1 653.4 345.8 653.8 351.2C654.2 356.6 653.8 362.3 653.8 364.5" stroke-width="1.5" />
<path d="M699.7 331.0C699.4 333.5 698.4 341.7 697.9 345.9C697.4 350.1 697.0 352.4 697.0 356.0C697.0 359.6 697.8 365.8 697.9 367.7" stroke-width="1.5" />
<path d="M752.4 326.6C752.7 329.2 753.8 337.8 754.1 342.4C754.4 347.0 754.4 349.7 754.1 354.0C753.8 358.3 753.3 364.0 752.4 368.1C751.5 372.2 750.2 375.5 748.9 378.6C747.6 381.7 745.2 385.2 744.5 386.5" stroke-width="1.5" />
<path d="M619.5 393.5L621.3 384.7C621.7 385.6 622.6 389.4 623.9 390.0C625.2 390.6 627.2 389.9 629.2 388.3C631.2 386.7 633.9 383.9 636.2 380.4C638.6 376.9 642.1 369.4 643.3 367.2L648.5 371.6L653.8 364.5C655.0 365.1 657.9 368.5 660.8 368.1C663.7 367.7 668.2 363.1 671.4 361.9C674.6 360.7 678.6 361.1 680.1 361.0L678.4 366.3C680.3 366.4 686.8 367.0 690.0 367.2C693.2 367.4 695.0 367.5 697.9 367.7C700.8 367.9 705.5 368.5 707.6 368.1C709.7 367.7 709.8 365.8 710.2 365.4L711.1 371.6C712.9 371.5 719.0 371.1 721.6 370.7C724.2 370.3 726.0 369.7 726.9 369.5C726.8 370.1 725.1 371.5 726.0 373.3C726.9 375.1 730.0 379.1 732.2 380.4C734.4 381.7 738.0 381.1 739.2 381.2L738.3 385.6C739.2 385.8 741.8 386.2 743.6 386.5C745.4 386.8 748.0 387.2 748.9 387.4" stroke-width="1.25" />
<path d="M619.5 393.5L618.7 401.4" stroke-width="0.7" />
<path d="M614.3 416.4C613.8 419.2 611.9 428.3 611.6 433.1C611.3 437.9 611.9 441.9 612.5 445.4C613.1 448.9 614.7 452.7 615.1 454.1" stroke-width="0.6" />
<path d="M744.5 387.0L747.1 394.4" stroke-width="0.7" />
<path d="M751.5 416.4C751.9 419.2 753.7 428.3 754.1 433.1C754.5 437.9 754.4 441.8 754.1 445.4C753.8 449.0 752.7 453.4 752.4 455.0" stroke-width="0.6" />
<ellipse cx="670" cy="398" rx="2.9" ry="7" fill="#000" stroke="none"/><ellipse cx="690" cy="397.5" rx="2.9" ry="7" fill="#000" stroke="none"/>
<path d="M491.3 452.4C493.2 454.7 498.4 462.3 502.7 466.4C506.9 470.5 511.5 474.0 516.8 477.0C522.1 480.0 529.0 482.6 534.3 484.2C539.6 485.8 543.7 486.5 548.4 486.5C553.1 486.5 557.7 485.3 562.4 484.2C567.1 483.1 571.8 481.4 576.5 479.6C581.2 477.8 585.2 476.0 590.5 473.5C595.8 471.0 602.2 466.8 608.1 464.7C614.0 462.6 622.8 461.8 625.7 461.2" stroke-width="1.9" />
<path d="M625.7 461.2C628.6 461.5 637.4 461.7 643.3 462.9C649.1 464.1 655.8 466.8 660.8 468.2C665.8 469.6 671.0 470.9 673.1 471.4C675.9 470.6 684.2 468.0 690.0 466.4C695.8 464.8 701.8 462.9 707.6 462.0C713.5 461.1 722.2 461.3 725.1 461.2" stroke-width="1.0" />
<path d="M725.1 461.2C728.0 461.8 736.8 462.8 742.7 464.7C748.6 466.6 754.4 470.2 760.3 472.6C766.1 475.0 771.9 477.1 777.8 478.9C783.6 480.7 788.9 482.4 795.4 483.6C801.9 484.8 809.8 485.9 816.5 485.9C823.2 485.9 829.6 484.9 835.8 483.6C841.9 482.3 848.1 480.1 853.4 478.0C858.7 475.9 863.6 473.2 867.4 471.0C871.2 468.8 873.0 467.4 876.0 464.5C879.0 461.6 883.8 455.2 885.4 453.3" stroke-width="1.9" />
<path d="M491.3 452.4C491.6 454.7 492.0 460.9 493.0 466.4C494.0 471.8 495.5 479.4 497.4 485.1C499.3 490.9 501.6 496.2 504.5 500.9C507.4 505.6 510.6 509.6 515.0 513.2C519.4 516.9 525.2 520.3 530.8 522.8C536.4 525.3 541.9 526.8 548.4 528.1C554.9 529.4 562.5 530.6 569.5 530.7C576.5 530.9 584.1 530.0 590.5 529.0C596.9 528.0 602.2 526.6 608.1 524.6C614.0 522.6 620.4 519.8 625.7 516.7C631.0 513.6 635.3 510.2 639.7 506.1C644.1 502.0 650.0 494.4 652.0 492.1" stroke-width="1.9" />
<path d="M652.0 492.1C653.5 490.2 658.1 483.5 660.8 480.7C663.4 477.9 665.8 476.6 667.9 475.4C670.0 474.2 671.1 473.5 673.1 473.6C675.1 473.8 677.3 474.5 680.1 476.3C682.9 478.1 688.4 482.9 690.0 484.2" stroke-width="0.9" />
<path d="M885.4 453.3C885.2 456.2 884.8 465.7 884.1 471.0C883.5 476.3 883.1 480.4 881.5 485.1C879.9 489.8 877.7 494.7 874.5 499.1C871.3 503.5 867.2 507.6 862.2 511.4C857.2 515.2 851.1 519.1 844.6 521.9C838.1 524.7 830.5 526.6 823.5 528.1C816.5 529.6 809.4 530.6 802.4 531.1C795.4 531.6 788.4 531.6 781.4 531.1C774.4 530.6 766.8 529.6 760.3 528.1C753.8 526.6 748.6 524.5 742.7 521.9C736.8 519.3 728.0 513.9 725.1 512.3" stroke-width="1.9" />
<path d="M725.1 512.3C722.2 510.1 713.5 503.8 707.6 499.1C701.8 494.4 692.9 486.7 690.0 484.2" stroke-width="1.1" />
<path d="M885.4 458.8L886.7 459.4L888.6 460.0L891.0 460.5L893.4 460.8L895.8 460.7L898.1 460.1L900.5 459.2L902.6 458.2L904.5 457.3L905.8 456.7L904.6 454.3L903.3 454.9L901.5 455.8L899.4 456.8L897.3 457.6L895.4 458.1L893.5 458.2L891.2 458.2L888.9 458.1L886.9 458.0L885.4 458.2zM904.2 454.7L903.2 456.0L901.8 457.9L900.2 460.0L898.4 462.0L896.5 463.7L894.3 465.1L891.6 466.6L888.8 468.0L886.5 469.4L884.9 470.5L885.1 471.1L887.0 470.7L889.6 469.8L892.6 468.7L895.6 467.3L898.1 465.7L900.2 463.8L902.2 461.6L903.9 459.5L905.2 457.6L906.2 456.3z" fill="#000" stroke="none"/>
<path d="M496.4 487.4L494.7 488.1L492.5 489.4L489.9 490.8L487.2 492.3L484.6 493.5L481.7 494.6L478.3 495.6L474.9 496.5L472.0 497.3L469.9 497.8L470.5 500.4L472.6 499.8L475.6 499.0L479.0 498.1L482.5 497.0L485.6 495.9L488.4 494.4L491.1 492.7L493.5 490.9L495.5 489.3L496.8 488.0zM469.7 500.3L471.2 500.9L473.4 501.9L476.0 502.9L478.7 503.9L481.3 504.8L483.8 505.4L486.3 505.9L488.9 506.2L491.4 506.5L493.9 506.5L496.4 506.2L498.9 505.7L501.3 505.0L503.2 504.4L504.6 503.8L504.4 503.2L503.0 503.2L500.9 503.5L498.6 503.8L496.2 504.1L493.9 504.1L491.6 504.0L489.2 503.7L486.8 503.3L484.3 502.8L481.9 502.2L479.5 501.5L476.9 500.5L474.4 499.5L472.2 498.5L470.7 497.9z" fill="#000" stroke="none"/>
<path d="M512.1 514.0L511.4 516.0L510.7 519.0L509.9 522.4L509.1 525.8L508.4 528.7L507.8 531.1L507.3 533.4L506.7 535.4L506.0 537.2L505.1 538.8L504.0 540.2L502.5 541.6L500.9 542.8L499.4 543.9L498.4 544.7L500.0 546.7L501.0 546.0L502.4 544.9L504.2 543.6L505.9 542.0L507.3 540.2L508.3 538.3L509.1 536.3L509.8 534.1L510.4 531.8L511.0 529.3L511.5 526.3L512.1 522.8L512.5 519.3L512.7 516.2L512.7 514.0zM499.7 546.9L501.1 546.3L503.1 545.6L505.5 544.6L508.0 543.6L510.3 542.5L512.4 541.4L514.6 540.3L516.8 539.0L519.0 537.6L521.1 536.1L523.1 534.1L525.1 531.7L526.9 529.4L528.4 527.3L529.3 525.7L528.9 525.3L527.5 526.5L525.7 528.3L523.6 530.4L521.5 532.4L519.5 534.1L517.6 535.5L515.5 536.8L513.4 538.0L511.3 539.1L509.1 540.1L506.9 541.2L504.5 542.2L502.2 543.1L500.1 543.9L498.7 544.5z" fill="#000" stroke="none"/>
<path d="M542.8 529.9L542.2 531.3L541.6 533.5L541.0 536.0L540.5 538.6L540.1 541.1L539.7 543.6L539.3 546.2L538.9 548.8L538.6 550.9L538.3 552.5L540.9 552.9L541.1 551.4L541.5 549.2L541.9 546.6L542.3 544.0L542.7 541.5L543.0 539.0L543.3 536.4L543.5 533.8L543.6 531.6L543.4 529.9zM540.7 553.4L541.4 552.3L542.3 550.8L543.4 549.1L544.6 547.3L545.9 545.6L547.3 544.1L549.0 542.4L550.7 540.8L552.6 539.3L554.3 537.9L556.4 536.8L558.7 535.6L561.0 534.6L563.0 533.6L564.3 532.8L564.1 532.2L562.5 532.5L560.4 533.0L557.9 533.7L555.4 534.7L553.1 535.9L551.0 537.2L549.0 538.8L547.2 540.5L545.5 542.3L543.9 544.0L542.5 545.7L541.2 547.6L540.1 549.4L539.2 551.0L538.5 552.0z" fill="#000" stroke="none"/>
<path d="M873.4 497.6L874.4 498.8L876.0 500.4L878.0 502.1L880.3 503.6L883.0 504.7L886.1 505.3L889.6 505.4L893.1 505.4L896.1 505.3L898.2 505.3L898.2 502.7L896.1 502.7L893.0 502.8L889.6 502.8L886.3 502.7L883.6 502.3L881.4 501.4L879.2 500.3L877.1 499.0L875.2 497.8L873.8 497.2zM897.5 502.9L896.2 503.8L894.4 505.0L892.4 506.4L890.2 507.6L888.1 508.5L885.9 508.9L883.5 509.2L881.0 509.3L878.6 509.4L876.3 509.3L874.1 509.1L871.9 508.8L869.8 508.4L868.0 508.0L866.7 507.9L866.5 508.5L867.7 509.1L869.4 509.8L871.5 510.6L873.8 511.3L876.1 511.7L878.5 511.9L881.1 511.9L883.7 511.8L886.4 511.5L888.9 510.9L891.3 510.0L893.7 508.6L895.9 507.2L897.7 505.9L898.9 505.1z" fill="#000" stroke="none"/>
<path d="M856.6 514.9L855.9 516.7L855.2 519.5L854.5 522.7L854.0 526.0L853.8 529.0L854.1 531.8L854.6 534.4L855.3 536.9L856.0 539.1L856.6 540.9L857.2 542.3L858.0 543.4L858.7 544.1L859.2 544.5L859.5 544.8L861.3 543.0L860.9 542.6L860.4 542.2L860.0 541.7L859.5 541.0L859.0 539.9L858.4 538.3L857.8 536.2L857.1 533.8L856.6 531.4L856.4 529.0L856.4 526.2L856.7 523.0L857.0 519.8L857.3 517.0L857.2 514.9zM860.9 542.7L859.7 542.2L857.9 541.4L856.0 540.6L854.0 539.6L852.4 538.5L851.0 537.2L849.6 535.7L848.2 534.1L846.8 532.4L845.5 530.9L844.2 529.4L842.9 527.8L841.6 526.4L840.5 525.2L839.5 524.4L839.1 524.8L839.5 525.9L840.3 527.3L841.3 529.0L842.5 530.7L843.7 532.3L844.9 534.0L846.2 535.7L847.6 537.4L849.1 539.1L850.8 540.5L852.7 541.8L854.8 542.9L856.9 543.8L858.7 544.6L859.9 545.1z" fill="#000" stroke="none"/>
<path d="M826.7 528.8L825.6 529.8L824.3 531.5L822.9 533.4L821.7 535.4L820.7 537.1L819.8 538.6L819.0 540.1L818.2 541.4L817.6 542.5L817.2 543.3L819.4 544.5L819.9 543.8L820.5 542.7L821.2 541.4L822.1 539.9L822.9 538.5L823.9 536.7L825.1 534.7L826.1 532.6L827.0 530.6L827.3 529.2z" fill="#000" stroke="none"/>
<path d="M571.2 532.5C569.7 534.5 565.3 539.8 562.4 544.8C559.5 549.8 556.6 556.0 553.7 562.4C550.8 568.8 547.5 577.1 544.9 583.4C542.2 589.7 540.1 595.9 537.8 600.3C535.4 604.7 533.3 607.8 530.8 610.0C528.3 612.2 524.2 612.9 522.9 613.5C524.8 612.8 530.0 611.0 534.3 609.1C538.5 607.2 543.7 604.5 548.4 602.1C553.1 599.8 558.0 597.4 562.4 595.0C566.8 592.6 570.0 591.1 574.7 588.0C579.4 584.9 585.8 580.7 590.5 576.4C595.2 572.1 599.6 567.1 602.8 562.4C606.0 557.7 607.8 553.3 609.9 548.3C612.0 543.3 613.0 537.2 615.1 532.5C617.2 527.8 621.0 522.2 622.2 520.2" stroke-width="1.75" />
<path d="M750.6 527.2C751.6 529.2 754.9 535.1 756.8 539.5C758.7 543.9 760.2 549.2 762.0 553.6C763.8 558.0 764.1 561.8 767.3 565.9C770.5 570.0 775.5 574.4 781.4 578.2C787.2 582.0 794.2 585.2 802.4 588.7C810.6 592.2 822.1 596.7 830.5 599.4C838.9 602.1 848.8 603.8 852.5 604.7C851.3 603.4 847.7 600.3 845.5 596.8C843.3 593.2 841.5 588.5 839.3 583.4C837.1 578.2 834.9 571.5 832.3 565.9C829.7 560.3 826.7 554.4 823.5 550.0C820.3 545.6 816.5 542.6 813.0 539.5C809.5 536.4 804.2 532.9 802.4 531.6" stroke-width="1.75" />
<path d="M602.8 564.1C604.3 564.2 609.4 564.1 611.6 565.0C613.8 565.9 615.0 566.3 616.0 569.4C617.0 572.5 617.3 580.3 617.8 583.4C618.2 586.5 618.4 584.3 618.7 588.0C619.0 591.7 619.4 598.3 619.5 605.6C619.6 612.9 619.9 623.7 619.5 631.9C619.1 640.1 618.2 648.1 616.9 654.8C615.6 661.5 614.0 666.4 611.6 672.3C609.2 678.1 605.7 684.6 602.8 689.9C599.9 695.2 596.3 700.5 594.1 704.0C591.9 707.5 590.4 709.8 589.7 711.0" stroke-width="1.1" stroke="#111"/>
<path d="M595.8 572.9C595.4 575.0 593.8 579.8 593.2 585.2C592.6 590.7 592.9 597.8 592.3 605.6C591.7 613.4 590.4 623.1 589.7 631.9C589.1 640.7 589.0 649.5 588.4 658.3C587.8 667.1 587.0 677.6 586.2 684.6C585.4 691.6 584.5 696.0 583.5 700.4C582.5 704.8 580.9 709.2 580.4 711.0" stroke-width="0.9" stroke="#111"/>
<path d="M616.9 568.5C619.8 568.5 629.5 567.9 634.5 568.5C639.5 569.1 643.3 570.4 646.8 572.0C650.3 573.6 653.5 575.5 655.6 578.2C657.7 580.9 658.1 583.4 659.1 588.0C660.1 592.6 661.0 598.3 661.7 605.6C662.4 612.9 663.3 623.1 663.5 631.9C663.7 640.7 663.5 649.8 662.9 658.3C662.3 666.8 661.3 675.9 659.9 682.9C658.5 689.9 656.5 695.7 654.7 700.4C653.0 705.1 650.3 709.2 649.4 711.0" stroke-width="0.9" stroke="#111"/>
<path d="M657.3 578.2C659.3 577.9 665.8 576.4 669.6 576.4C673.4 576.4 676.7 578.6 680.1 578.2C683.5 577.8 686.0 575.8 690.0 573.8C694.0 571.8 700.3 567.7 704.1 565.9C707.9 564.1 710.8 563.2 712.8 563.2C714.8 563.2 715.8 565.5 716.4 565.9" stroke-width="0.9" stroke="#111"/>
<path d="M680.1 579.0C679.7 580.9 678.3 586.6 677.5 590.5C676.7 594.4 675.8 597.8 675.4 602.1C675.0 606.4 675.0 611.1 675.4 616.1C675.8 621.1 676.4 626.9 677.5 631.9C678.6 636.9 680.4 641.9 681.9 646.0C683.4 650.1 684.9 653.6 686.3 656.5C687.6 659.4 688.5 660.3 690.0 663.5C691.5 666.7 693.7 670.8 695.3 675.8C696.9 680.8 698.7 687.5 699.7 693.4C700.7 699.3 701.1 708.1 701.4 711.0" stroke-width="0.9" stroke="#111"/>
<path d="M689.3 663.5L689.3 711.0" stroke-width="0.9" stroke="#111"/>
<path d="M560.7 596.8C559.8 599.7 556.7 607.1 555.4 614.4C554.1 621.7 553.3 631.9 552.8 640.7C552.3 649.5 552.2 658.3 552.4 667.1C552.5 675.9 553.4 686.4 553.7 693.4C554.0 700.4 554.0 706.6 554.0 709.2" stroke-width="0.9" stroke="#111"/>
<path d="M554.0 709.2C554.2 707.5 554.4 701.9 555.4 698.7C556.4 695.5 557.4 694.6 559.8 689.9C562.1 685.2 566.1 676.5 569.5 670.6C572.9 664.8 576.8 659.5 580.0 654.8C583.2 650.1 587.3 644.5 588.8 642.5" stroke-width="1.1" stroke="#111"/>
<path d="M559.8 690.8C559.8 692.3 560.0 696.6 559.8 700.0C559.6 703.4 558.8 709.2 558.6 711.0" stroke-width="0.9" stroke="#111"/>
<path d="M619.5 633.7C620.2 636.0 622.9 642.7 623.9 647.7C624.9 652.7 625.7 657.6 625.7 663.5C625.7 669.4 624.7 676.8 623.9 682.9C623.1 689.0 621.5 695.7 620.8 700.4C620.1 705.1 619.7 709.2 619.5 711.0" stroke-width="0.9" stroke="#111"/>
<path d="M662.6 667.9C663.5 669.5 666.3 673.6 667.9 677.6C669.5 681.6 671.0 686.1 672.2 691.7C673.5 697.3 674.9 707.8 675.4 711.0" stroke-width="0.9" stroke="#111"/>
<path d="M716.4 565.9C715.5 568.2 712.3 576.2 711.1 579.9C709.9 583.6 709.9 584.3 709.3 588.0C708.7 591.7 707.6 597.4 707.6 602.1C707.6 606.8 707.8 610.8 709.3 616.1C710.8 621.4 714.6 627.2 716.4 633.7C718.2 640.2 719.2 647.8 719.9 654.8C720.6 661.8 720.7 666.4 720.7 675.8C720.8 685.2 720.3 705.1 720.2 711.0" stroke-width="0.9" stroke="#111"/>
<path d="M719.9 656.5C720.6 659.7 723.0 669.1 724.3 675.8C725.6 682.5 726.8 691.0 727.8 696.9C728.8 702.8 729.7 708.6 730.1 711.0" stroke-width="0.9" stroke="#111"/>
<path d="M716.4 565.9C718.5 564.7 724.3 560.3 728.7 558.8C733.1 557.3 737.2 557.5 742.7 557.1C748.2 556.7 758.8 556.4 762.0 556.2" stroke-width="0.9" stroke="#111"/>
<path d="M741.8 558.0C741.8 561.1 741.7 571.4 741.8 576.4C741.9 581.4 742.1 583.1 742.4 588.0C742.7 592.9 743.0 599.1 743.6 605.6C744.2 612.1 745.0 619.7 746.2 626.7C747.4 633.7 749.9 644.2 750.6 647.7" stroke-width="0.9" stroke="#111"/>
<path d="M750.6 647.7C751.6 650.9 754.3 660.7 756.8 667.1C759.3 673.5 762.3 679.1 765.5 686.4C768.7 693.7 774.3 706.9 776.1 711.0" stroke-width="1.4" stroke="#111"/>
<path d="M756.8 669.7C756.3 673.1 755.2 683.0 754.1 689.9C753.0 696.8 750.8 707.5 750.1 711.0" stroke-width="0.9" stroke="#111"/>
<path d="M784.9 581.7C785.1 582.8 785.6 582.5 786.3 588.0C787.0 593.5 788.6 605.6 789.3 614.4C790.0 623.2 790.4 632.5 790.5 640.7C790.6 648.9 790.6 656.5 790.1 663.5C789.6 670.5 788.1 675.0 787.5 682.9C786.9 690.8 786.5 706.3 786.3 711.0" stroke-width="0.9" stroke="#111"/>
<path d="M787.5 683.7C788.5 685.6 792.3 690.7 793.7 695.2C795.1 699.8 795.5 708.4 795.9 711.0" stroke-width="0.9" stroke="#111"/>
<path d="M810.9 594.1C810.7 597.5 809.7 606.6 809.5 614.4C809.3 622.2 809.1 632.8 809.5 640.7C809.9 648.6 811.6 654.2 812.1 661.8C812.6 669.4 812.7 678.2 812.6 686.4C812.5 694.6 811.8 706.9 811.6 711.0" stroke-width="0.9" stroke="#111"/></svg><!--/ARTSVG-->
</div>
<div id="vscroll" class="abs"><div class="abs" style="left:3px;top:6px;border:5px solid transparent;border-bottom:7px solid #e6e6e6;border-top:none"></div><div class="abs" style="left:0;top:298px;width:16px;height:16px;background:#9a9a9a"></div><div class="abs" style="left:3px;top:614px;border:5px solid transparent;border-top:7px solid #e6e6e6;border-bottom:none"></div></div>
<div id="status" class="abs">

<svg class="abs" style="left:10px;top:1px" width="16" height="12" viewBox="0 0 16 12"><path d="M1.5 2.5h5M1.5 2.5v9h9v-3" fill="none" stroke="#d8d8d8" stroke-width="1.4"/><path d="M4.5 9c0-4 2-5.5 6-5.5v-3l5 4.5-5 4.5v-3c-3 0-4.5.5-6 2.5z" fill="#d8d8d8"/></svg>
<div class="f" style="left:34px;width:52px">100%</div><div class="d" style="left:86px;width:15px"></div>
<svg class="abs" style="left:108px;top:1px" width="130" height="12" viewBox="0 0 130 12"><path d="M3 2v9" stroke="#7a7a7a" stroke-width="1.5"/><path d="M11 2v9l-6-4.5zM27 2v9l-6-4.5z" fill="#7a7a7a"/><path d="M105 2v9l6-4.5zM120 2v9l6-4.5z" fill="#6e6e6e"/><path d="M127.5 2v9" stroke="#6e6e6e" stroke-width="1.5"/></svg>
<div class="f" style="left:144px;width:42px">1</div><div class="d" style="left:186px;width:15px"></div>
<div class="abs" style="left:242px;top:0;width:1px;height:13px;background:#2c2c2c"></div>
<span class="abs" style="left:323px;top:4.5px;font-size:10px;line-height:12px;color:#e8e8e8;letter-spacing:-0.26px;white-space:nowrap">Selección</span>
<div class="abs" style="left:451px;top:2px;border:5px solid transparent;border-left:6px solid #e6e6e6;border-right:none"></div>
<div class="abs" style="left:462px;top:0;width:773px;height:13px;background:#333"></div>
<div class="abs" style="left:468px;top:2px;border:5px solid transparent;border-right:6px solid #e6e6e6;border-left:none"></div>
<div class="abs" style="left:844px;top:0;width:15px;height:13px;background:#9a9a9a"></div>
<div class="abs" style="left:1223px;top:2px;border:5px solid transparent;border-left:6px solid #e6e6e6;border-right:none"></div>

</div>
<!--DOCK-->
<div id="dock" class="abs">
<!--DOCKBODY-->
</div>
<!--DOCKSVG--><svg class="abs" style="left:0;top:0" width="1366" height="724" viewBox="0 0 1366 724"><defs><linearGradient id="dgh" x1="0" y1="0" x2="1" y2="0"><stop offset="0" stop-color="#3a3a3a"/><stop offset="1" stop-color="#d8d8d8"/></linearGradient><linearGradient id="dgv" x1="0" y1="0" x2="0" y2="1"><stop offset="0" stop-color="#e6e6e6"/><stop offset="1" stop-color="#9a9a9a"/></linearGradient></defs><rect x="1329" y="65" width="37" height="11" fill="#303030"/><path d="M1357.5 67.5l-3.5 3 3.5 3zM1362 67.5l-3.5 3 3.5 3z" fill="#d0d0d0"/><path d="M1329 76.5h37" stroke="#2c2c2c"/><path d="M1329 77.5h37" stroke="#585858"/><path d="M1337.5 80v5M1339.5 80v5M1341.5 80v5M1343.5 80v5M1345.5 80v5M1347.5 80v5M1349.5 80v5M1351.5 80v5M1353.5 80v5M1355.5 80v5" stroke="#1c1c1c" stroke-width="1"/><path d="M1347 93c5.5 0 9.5 3 9.5 7 0 2.5-1.5 3.5-3.5 3.5-1.5 0-2.5.5-2.5 1.5 0 1.5-1 2.5-3.5 2.5-5 0-9-3-9-7.5s4-7 9-7z" fill="#d2d2d2"/><circle cx="1342.5" cy="102" r="1.4" fill="#474747"/><circle cx="1345" cy="98" r="1.4" fill="#474747"/><circle cx="1349.5" cy="96.5" r="1.4" fill="#474747"/><circle cx="1353.5" cy="98.5" r="1.4" fill="#474747"/><circle cx="1347" cy="104.5" r="1.3" fill="#474747"/><path d="M1339 120v16.5h17.5a17 17 0 0 0-17.5-16.5z" fill="#9c9c9c" stroke="#d2d2d2" stroke-width="1"/><path d="M1339 136.5l7-15a17 17 0 0 0-7-1.5z" fill="#dcdcdc"/><path d="M1339 136.5l7-15a17 17 0 0 1 6.5 5z" fill="#b0b0b0"/><path d="M1339 136.5l13.5-10a17 17 0 0 1 3.300 6z" fill="#808080"/><path d="M1339 136.5l16.800-4a17 17 0 0 1 .7 4z" fill="#505050"/><circle cx="1346" cy="156" r="5.8" fill="none" stroke="#d2d2d2" stroke-width="1.3"/><circle cx="1346" cy="156" r="2.2" fill="#d2d2d2"/><path d="M1346 156l8-8M1346 156l8 8" stroke="#d2d2d2" stroke-width="1.6"/><circle cx="1354" cy="148" r="2.3" fill="#d2d2d2"/><circle cx="1354" cy="164.5" r="2.3" fill="#d2d2d2"/><path d="M1329 173.0h37" stroke="#2c2c2c"/><path d="M1329 174.0h37" stroke="#585858"/><path d="M1337.5 177v5M1339.5 177v5M1341.5 177v5M1343.5 177v5M1345.5 177v5M1347.5 177v5M1349.5 177v5M1351.5 177v5M1353.5 177v5M1355.5 177v5" stroke="#1c1c1c" stroke-width="1"/><rect x="1339" y="192" width="17" height="11" fill="#d2d2d2"/><rect x="1340" y="193" width="4.5" height="4" fill="#2a2a2a"/><rect x="1345.5" y="193" width="4.5" height="4" fill="#555"/><rect x="1351" y="193" width="4" height="4" fill="#999"/><rect x="1340" y="198" width="4.5" height="4" fill="#999"/><rect x="1345.5" y="198" width="4.5" height="4" fill="#777"/><rect x="1351" y="198" width="4" height="4" fill="#444"/><rect x="1344" y="226" width="7.5" height="8.5" fill="#d2d2d2"/><path d="M1346.5 226l-.5-8c0-1.5 1.5-1.5 1.5 0l.5 8z" fill="#d2d2d2"/><path d="M1345 226c-1-3-4-4-4.5-8 2 1 4.5 3 5.5 8z" fill="#9c9c9c"/><path d="M1349 226c0-3 1-5 2.5-6.5 2-1.5 4-1 5 .5-2 .5-3 1.5-4 3l-2 3z" fill="#d2d2d2"/><circle cx="1347.5" cy="249" r="4.3" fill="#d2d2d2"/><circle cx="1343.3" cy="254" r="4.3" fill="#d2d2d2"/><circle cx="1351.7" cy="254" r="4.3" fill="#d2d2d2"/><path d="M1347.5 252l1.2 7.5 2.5 1.5h-7.5l2.5-1.5z" fill="#d2d2d2"/><path d="M1329 270.0h37" stroke="#2c2c2c"/><path d="M1329 271.0h37" stroke="#585858"/><path d="M1337.5 274v5M1339.5 274v5M1341.5 274v5M1343.5 274v5M1345.5 274v5M1347.5 274v5M1349.5 274v5M1351.5 274v5M1353.5 274v5M1355.5 274v5" stroke="#1c1c1c" stroke-width="1"/><path d="M1339 288h17.5" stroke="#d2d2d2" stroke-width="1.2"/><path d="M1339 292.8h17.5" stroke="#d2d2d2" stroke-width="2"/><path d="M1339 298.5h17.5" stroke="#d2d2d2" stroke-width="3.2"/><rect x="1339.5" y="316.5" width="16.5" height="11.5" fill="url(#dgh)" stroke="#d2d2d2" stroke-width="1.1"/><circle cx="1345" cy="348.5" r="6.6" fill="#9c9c9c"/><circle cx="1349.3" cy="352.5" r="5.8" fill="#6a6a6a" fill-opacity=".75" stroke="#d2d2d2" stroke-width="1.2"/><path d="M1329 367.5h37" stroke="#2c2c2c"/><path d="M1329 368.5h37" stroke="#585858"/><path d="M1337.5 371v5M1339.5 371v5M1341.5 371v5M1343.5 371v5M1345.5 371v5M1347.5 371v5M1349.5 371v5M1351.5 371v5M1353.5 371v5M1355.5 371v5" stroke="#1c1c1c" stroke-width="1"/><circle cx="1347.5" cy="391" r="8" fill="none" stroke="#d2d2d2" stroke-width="1.2" stroke-dasharray="2.2 1.5"/><circle cx="1347.5" cy="391" r="5.8" fill="url(#dgv)"/><rect x="1342.5" y="412.5" width="13.5" height="13" fill="none" stroke="#d2d2d2" stroke-width="1.2"/><rect x="1341" y="422" width="6.5" height="6.5" fill="#9c9c9c"/><rect x="1339.5" y="419.5" width="5.5" height="5.5" fill="#474747" stroke="#d2d2d2" stroke-width="1.1"/><path d="M1329 436.0h37" stroke="#2c2c2c"/><path d="M1329 437.0h37" stroke="#585858"/><path d="M1337.5 440v5M1339.5 440v5M1341.5 440v5M1343.5 440v5M1345.5 440v5M1347.5 440v5M1349.5 440v5M1351.5 440v5M1353.5 440v5M1355.5 440v5" stroke="#1c1c1c" stroke-width="1"/><rect x="1332.5" y="448.5" width="28.5" height="23.5" rx="3" fill="#2e2e2e" stroke="#3a3a3a"/><path d="M1347.5 459.5l-8.5 4.5 8.5 4.5 8.5-4.5z" fill="#9c9c9c"/><path d="M1347.5 452l-8.5 5 8.5 5 8.5-5z" fill="#f0f0f0" stroke="#2e2e2e" stroke-width=".6"/><rect x="1338.5" y="479.5" width="9.5" height="12.5" fill="#474747" stroke="#d2d2d2" stroke-width="1.2"/><rect x="1343.5" y="486.5" width="12.5" height="10" fill="#474747" stroke="#d2d2d2" stroke-width="1.2"/><path d="M1329 504.5h37" stroke="#2c2c2c"/><path d="M1329 505.5h37" stroke="#585858"/></svg><!--/DOCKSVG-->
<!--LAYERS-->
<div id="layers" class="abs">

<div class="abs" style="left:0;top:0;width:236px;height:16px;background:#333"></div>
<div class="abs" style="left:0;top:0;width:41px;height:17px;background:#474747;border-right:1px solid #2c2c2c"></div>
<div class="abs" style="left:42px;top:0;width:92px;height:16px;background:#3c3c3c;border-right:1px solid #2c2c2c"></div>
<span class="abs" style="left:7px;top:2px;font-size:10px;line-height:13px;color:#f0f0f0;letter-spacing:-0.48px;-webkit-text-stroke:.2px #f0f0f0">Capas</span>
<span class="abs" style="left:48px;top:2px;font-size:10px;line-height:13px;color:#8c8c8c;letter-spacing:0.04px;-webkit-text-stroke:.3px #8c8c8c;white-space:nowrap">Mesas de trabajo</span>
<svg class="abs" style="left:195px;top:3px" width="40" height="10" viewBox="0 0 40 10"><path d="M1 1v8l4.5-4zM6 1v8l4.5-4z" fill="#d8d8d8"/><path d="M16.5 0v10" stroke="#2a2a2a"/><path d="M17.5 0v10" stroke="#666"/><path d="M18.5 0v10" stroke="#2a2a2a"/><path d="M19.5 0v10" stroke="#666"/><path d="M23 3.5h5l-2.5 3z" fill="#d8d8d8"/><path d="M29 2h8.5M29 5h8.5M29 8h8.5" stroke="#d8d8d8" stroke-width="1.3"/></svg>
<div class="abs" style="left:6px;top:23px;width:226px;height:154px;border:1px solid #363636;background:#474747"></div>
<div class="row" style="top:24px;background:#474747;border-bottom:1px solid #383838">
 <div class="cs" style="left:20px"></div><div class="cs" style="left:41px"></div><div class="abs" style="left:43px;top:0;width:3.5px;height:20px;background:#f04c4c"></div><div class="cs" style="left:48px"></div><div class="cs" style="left:190px"></div>
 <svg class="abs" style="left:3px;top:4px" width="13" height="10.5" viewBox="0 0 14 11"><path d="M.5 5.5c3-5.5 10-5.5 13 0-3 5-10 5-13 0z" fill="#cdcdcd" stroke="#cdcdcd" stroke-width=".8"/><circle cx="7" cy="5" r="2.8" fill="#3c3c3c"/><circle cx="8" cy="4" r=".9" fill="#e0e0e0"/></svg>
 <div class="abs" style="left:53px;top:6px;border:4.5px solid transparent;border-left:6px solid #e0e0e0;border-right:none"></div>
 <svg class="abs" style="left:69px;top:1px" width="19" height="19" viewBox="0 0 19 19"><rect x=".5" y=".5" width="18" height="18" fill="#fff" stroke="#111"/><g fill="none" stroke="#1a1a1a" stroke-width=".8" stroke-linejoin="round"><path d="M5.3 8.8l-.8-1 .9-.6-.9-1 1-.5-.6-1.2 1.2-.2-.2-1.2 1.2.4.3-1.3 1 .9.8-1.3.7 1.3 1-1 .3 1.3 1.2-.5-.2 1.2 1.2.1-.6 1.2 1 .5-.9 1 .9.7-.9.9"/><path d="M7.2 4.500l.8-.6M11.8 4.500l-.8-.6M7.3 5.400h1.7v1.600h-1.400zM10 5.400h1.7l-.3 1.600h-1.400z" stroke-width=".7"/><path d="M5 9c1.500 1.2 3 .5 4.500-.4 1.500.9 3 1.600 4.500.4-.5 1.8-2.500 2-4.500.6-2 1.400-4 1.2-4.500-.6z" stroke-width=".8"/><path d="M6.8 10.8l-1 1.7 1.7-.8M12.2 10.8l1 1.7-1.7-.8M7.2 11.500l-.2 5M8.3 11.8v4.7M9.500 12v4.500M10.7 11.8v4.7M11.8 11.500l.2 5" stroke-width=".6"/></g><circle cx="9" cy="7.7" r=".35" fill="#000"/><circle cx="10" cy="7.7" r=".35" fill="#000"/></svg>
 <span class="nm" style="letter-spacing:-0.45px">Trazos</span>
 <svg class="abs" style="left:195px;top:5px" width="11" height="11" viewBox="0 0 11 11"><circle cx="5.5" cy="5.5" r="4" fill="none" stroke="#cfcfcf" stroke-width="1.2"/></svg>
 <div class="abs" style="left:219px;top:0;border-left:6px solid transparent;border-top:6px solid #e6e6e6"></div>
</div>
<div class="row" style="top:45px;height:20px;background:#5a6474">
 <div class="cs" style="left:20px"></div><div class="cs" style="left:41px"></div><div class="abs" style="left:43px;top:0;width:3.5px;height:20px;background:#4c7cf0"></div><div class="cs" style="left:48px"></div><div class="cs" style="left:190px"></div>
 <svg class="abs" style="left:26px;top:4px" width="10" height="12" viewBox="0 0 10 12"><path d="M2.5 5.5v-2a2.5 2.5 0 0 1 5 0v2" fill="none" stroke="#d0d0d0" stroke-width="1.3"/><rect x="1" y="5.5" width="8" height="6" fill="#d0d0d0"/><rect x="4.3" y="7.5" width="1.4" height="2.5" fill="#5a6474"/></svg>
 <div class="abs" style="left:53px;top:6px;border:4.5px solid transparent;border-left:6px solid #e0e0e0;border-right:none"></div>
 <svg class="abs" style="left:69px;top:1px" width="19" height="19" viewBox="0 0 19 19"><rect x=".5" y=".5" width="18" height="18" fill="#fff" stroke="#111"/><path d="M7 5l.5 1M11 4l.5 1.5M9 8l.3 1M8 11l.5 1.5M11 10l.2 1M9.5 14l.3 1" stroke="#d9b8c0" stroke-width=".8"/></svg>
 <span class="nm" style="letter-spacing:-0.19px">Boceto</span>
 <svg class="abs" style="left:195px;top:5px" width="11" height="11" viewBox="0 0 11 11"><circle cx="5.5" cy="5.5" r="4" fill="none" stroke="#cfcfcf" stroke-width="1.2"/></svg>
</div>
<span class="abs" style="left:6px;top:182px;font-size:10px;line-height:13px;color:#f0f0f0;letter-spacing:-0.16px;-webkit-text-stroke:.25px #f0f0f0">2 capas</span>
<svg class="abs" style="left:92px;top:178px" width="144" height="18" viewBox="0 0 144 18"><circle cx="10" cy="6.5" r="3.8" fill="none" stroke="#6c6c6c" stroke-width="1.2"/><path d="M7.5 9.5L2 15" stroke="#6c6c6c" stroke-width="1.3"/><rect x="28.5" y="3.5" width="7" height="7" fill="#5a5a5a" stroke="#6c6c6c"/><rect x="32.5" y="7.5" width="7" height="7" fill="#555" fill-opacity=".7" stroke="#6c6c6c"/><path d="M57 5h9.5v9h-5.5z" fill="#d4d4d4"/><path d="M54 7l7 7v-5z" fill="#474747"/><path d="M52 3v4h5M55 4.5l2.5 2.5-2.5 2.5" fill="none" stroke="#d4d4d4" stroke-width="1.3"/><path d="M80 4.5h11v10h-6.5l-4.5-4.5z" fill="#d4d4d4"/><path d="M80 10v4.5h4.5z" fill="#474747"/><path d="M81 11.5l3 3v-3z" fill="#d4d4d4"/><path d="M106 5.5h10M109 5.5v-2h4v2" fill="none" stroke="#cfcfcf" stroke-width="1.3"/><path d="M107 7h8l-.7 8h-6.600z" fill="#cfcfcf"/><path d="M109.5 8.5v5M111 8.5v5M112.5 8.5v5" stroke="#474747" stroke-width=".8"/><path d="M141.5 8v1M141.5 10v1M139.5 10v1M141.5 12v1M139.5 12v1M137.5 12v1M141.5 14v1M139.5 14v1M137.5 14v1M135.5 14v1" stroke="#1e1e1e" stroke-width="1"/></svg>
<div class="abs" style="left:0;top:196px;width:236px;height:1px;background:#2c2c2c"></div>
<div class="abs" style="left:0;top:197px;width:236px;height:1px;background:#5a5a5a"></div>
<div class="grip" style="left:108px;top:199px;width:20px;height:4px"></div>

</div>
</div>
</body>
</html>
